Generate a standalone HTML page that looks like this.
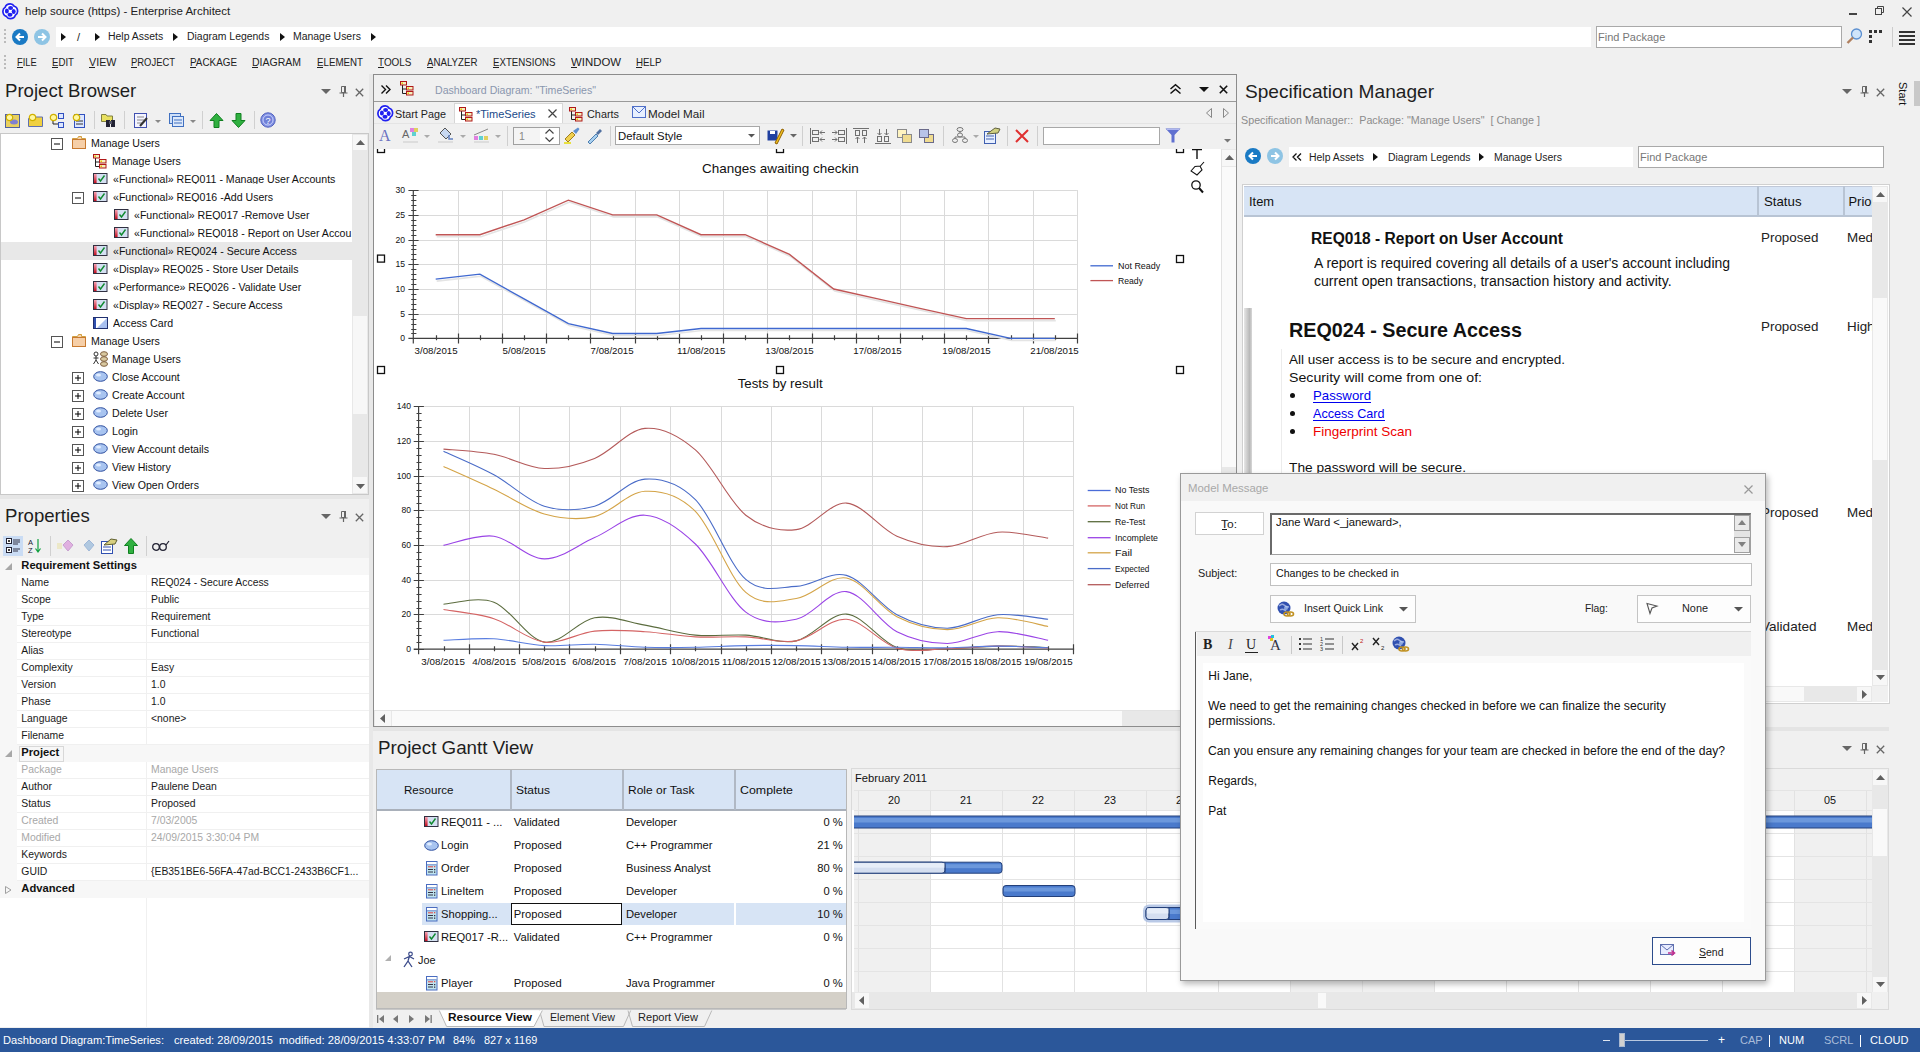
<!DOCTYPE html>
<html><head><meta charset="utf-8"><title>Enterprise Architect</title>
<style>
html,body{margin:0;padding:0;}
body{width:1920px;height:1052px;overflow:hidden;position:relative;background:#f0f0f0;font-family:"Liberation Sans",sans-serif;color:#000;}
.a{position:absolute;}
.t{position:absolute;white-space:pre;}
svg.a{overflow:visible;}
</style></head><body>
<svg class="a" style="left:2px;top:3px;" width="17" height="17" viewBox="0 0 17 17"><path d="M8.3 0.9 C10.5 0.9 11.5 2 12.2 3.2 C13.6 3.6 15.6 5 15.6 8.3 C15.6 10.5 14.5 11.6 13.3 12.3 C12.9 13.7 11.5 15.7 8.3 15.7 C6.1 15.7 5 14.6 4.3 13.4 C2.9 13 0.9 11.6 0.9 8.3 C0.9 6.1 2 5 3.2 4.3 C3.6 2.9 5 0.9 8.3 0.9z" fill="#fff" stroke="#2020f0" stroke-width="1.7"/><g fill="#2020f0"><ellipse cx="8.6" cy="4.9" rx="2.5" ry="2"/><ellipse cx="11.7" cy="8.6" rx="2" ry="2.5"/><ellipse cx="8" cy="11.7" rx="2.5" ry="2"/><ellipse cx="4.9" cy="8" rx="2" ry="2.5"/></g></svg>
<div class="t" style="left:25.0px;top:6.3px;font-size:11.5px;line-height:11.5px;color:#222;">help source (https) - Enterprise Architect</div>
<div class="a" style="left:1849px;top:13px;width:8px;height:2px;background:#444;"></div>
<svg class="a" style="left:1875px;top:6px;" width="10" height="10" viewBox="0 0 10 10"><rect x="0.5" y="2.5" width="6" height="6" fill="none" stroke="#444"/><path d="M2.5 2.5 V0.5 H8.5 V6.5 H6.5" fill="none" stroke="#444"/></svg>
<svg class="a" style="left:1902px;top:7px;" width="10" height="10" viewBox="0 0 10 10"><path d="M0.5 0.5 L9.5 9.5 M9.5 0.5 L0.5 9.5" stroke="#444" stroke-width="1.2"/></svg>
<div class="a" style="left:4px;top:29px;width:2px;height:2px;background:#bbb;"></div>
<div class="a" style="left:4px;top:33px;width:2px;height:2px;background:#bbb;"></div>
<div class="a" style="left:4px;top:37px;width:2px;height:2px;background:#bbb;"></div>
<div class="a" style="left:4px;top:41px;width:2px;height:2px;background:#bbb;"></div>
<svg class="a" style="left:12px;top:29px;" width="17" height="17" viewBox="0 0 17 17"><circle cx="8" cy="8" r="8" fill="#1a7ac4"/><path d="M12 8 H4.5 M8 4.5 L4.5 8 L8 11.5" stroke="#fff" stroke-width="2" fill="none"/></svg>
<svg class="a" style="left:34px;top:29px;" width="17" height="17" viewBox="0 0 17 17"><circle cx="8" cy="8" r="8" fill="#8ec4e4"/><path d="M4 8 H11.5 M8 4.5 L11.5 8 L8 11.5" stroke="#fff" stroke-width="2" fill="none"/></svg>
<div class="a" style="left:56px;top:27px;width:1535px;height:20px;background:#fff;"></div>
<svg class="a" style="left:61px;top:33px;" width="5" height="8" viewBox="0 0 5 8"><path d="M0 0 L5 4 L0 8z" fill="#111"/></svg>
<div class="t" style="left:77.0px;top:31.7px;font-size:11px;line-height:11px;color:#222;">/</div>
<svg class="a" style="left:95px;top:33px;" width="5" height="8" viewBox="0 0 5 8"><path d="M0 0 L5 4 L0 8z" fill="#111"/></svg>
<div class="t" style="left:108.0px;top:32.2px;font-size:10.45px;line-height:10.45px;color:#222;">Help Assets</div>
<svg class="a" style="left:173px;top:33px;" width="5" height="8" viewBox="0 0 5 8"><path d="M0 0 L5 4 L0 8z" fill="#111"/></svg>
<div class="t" style="left:187.0px;top:32.2px;font-size:10.45px;line-height:10.45px;color:#222;">Diagram Legends</div>
<svg class="a" style="left:280px;top:33px;" width="5" height="8" viewBox="0 0 5 8"><path d="M0 0 L5 4 L0 8z" fill="#111"/></svg>
<div class="t" style="left:293.0px;top:32.2px;font-size:10.45px;line-height:10.45px;color:#222;">Manage Users</div>
<svg class="a" style="left:371px;top:33px;" width="5" height="8" viewBox="0 0 5 8"><path d="M0 0 L5 4 L0 8z" fill="#111"/></svg>
<div class="a" style="left:1596px;top:26px;width:246px;height:22px;background:#fff;box-sizing:border-box;border:1px solid #a9a9a9;"></div>
<div class="t" style="left:1598.0px;top:31.7px;font-size:11px;line-height:11px;color:#777;">Find Package</div>
<svg class="a" style="left:1846px;top:28px;" width="17" height="17" viewBox="0 0 17 17"><circle cx="10.5" cy="6" r="5" fill="#cfe4fa" stroke="#5b8fd0" stroke-width="1.3"/><path d="M7 9.5 L1.5 15" stroke="#b08060" stroke-width="2.4"/></svg>
<svg class="a" style="left:1869px;top:30px;" width="16" height="15" viewBox="0 0 16 15"><g fill="#333"><rect x="0" y="0" width="3" height="3"/><rect x="5" y="0" width="3" height="3"/><rect x="10" y="0" width="3" height="3"/><rect x="0" y="5" width="3" height="3"/><rect x="0" y="10" width="3" height="3"/></g></svg>
<div class="a" style="left:1892px;top:27px;width:1px;height:20px;background:#ccc;"></div>
<svg class="a" style="left:1899px;top:31px;" width="16" height="14" viewBox="0 0 16 14"><g fill="#333"><rect y="0" width="16" height="2"/><rect y="4" width="16" height="2"/><rect y="8" width="16" height="2"/><rect y="12" width="16" height="2"/></g></svg>
<div class="a" style="left:4px;top:55px;width:2px;height:2px;background:#bbb;"></div>
<div class="a" style="left:4px;top:59px;width:2px;height:2px;background:#bbb;"></div>
<div class="a" style="left:4px;top:63px;width:2px;height:2px;background:#bbb;"></div>
<div class="a" style="left:4px;top:67px;width:2px;height:2px;background:#bbb;"></div>
<div class="t" style="left:17.0px;top:57.1px;font-size:10.5px;line-height:10.5px;color:#222;"><span style="display:inline-block;transform:scaleX(0.8901);transform-origin:0 0">FILE</span></div>
<div class="a" style="left:17px;top:67px;width:6px;height:1px;background:#222;"></div>
<div class="t" style="left:52.0px;top:57.1px;font-size:10.5px;line-height:10.5px;color:#222;"><span style="display:inline-block;transform:scaleX(0.9197);transform-origin:0 0">EDIT</span></div>
<div class="a" style="left:52px;top:67px;width:6px;height:1px;background:#222;"></div>
<div class="t" style="left:89.0px;top:57.1px;font-size:10.5px;line-height:10.5px;color:#222;"><span style="display:inline-block;transform:scaleX(1.0244);transform-origin:0 0">VIEW</span></div>
<div class="a" style="left:89px;top:67px;width:6px;height:1px;background:#222;"></div>
<div class="t" style="left:131.0px;top:57.1px;font-size:10.5px;line-height:10.5px;color:#222;"><span style="display:inline-block;transform:scaleX(0.8977);transform-origin:0 0">PROJECT</span></div>
<div class="a" style="left:131px;top:67px;width:6px;height:1px;background:#222;"></div>
<div class="t" style="left:190.0px;top:57.1px;font-size:10.5px;line-height:10.5px;color:#222;"><span style="display:inline-block;transform:scaleX(0.9400);transform-origin:0 0">PACKAGE</span></div>
<div class="a" style="left:190px;top:67px;width:6px;height:1px;background:#222;"></div>
<div class="t" style="left:252.0px;top:57.1px;font-size:10.5px;line-height:10.5px;color:#222;"><span style="display:inline-block;transform:scaleX(0.9997);transform-origin:0 0">DIAGRAM</span></div>
<div class="a" style="left:252px;top:67px;width:6px;height:1px;background:#222;"></div>
<div class="t" style="left:317.0px;top:57.1px;font-size:10.5px;line-height:10.5px;color:#222;"><span style="display:inline-block;transform:scaleX(0.9275);transform-origin:0 0">ELEMENT</span></div>
<div class="a" style="left:317px;top:67px;width:6px;height:1px;background:#222;"></div>
<div class="t" style="left:378.0px;top:57.1px;font-size:10.5px;line-height:10.5px;color:#222;"><span style="display:inline-block;transform:scaleX(0.9462);transform-origin:0 0">TOOLS</span></div>
<div class="a" style="left:378px;top:67px;width:6px;height:1px;background:#222;"></div>
<div class="t" style="left:427.0px;top:57.1px;font-size:10.5px;line-height:10.5px;color:#222;"><span style="display:inline-block;transform:scaleX(0.9240);transform-origin:0 0">ANALYZER</span></div>
<div class="a" style="left:427px;top:67px;width:6px;height:1px;background:#222;"></div>
<div class="t" style="left:493.0px;top:57.1px;font-size:10.5px;line-height:10.5px;color:#222;"><span style="display:inline-block;transform:scaleX(0.9234);transform-origin:0 0">EXTENSIONS</span></div>
<div class="a" style="left:493px;top:67px;width:6px;height:1px;background:#222;"></div>
<div class="t" style="left:571.0px;top:57.1px;font-size:10.5px;line-height:10.5px;color:#222;"><span style="display:inline-block;transform:scaleX(1.0851);transform-origin:0 0">WINDOW</span></div>
<div class="a" style="left:571px;top:67px;width:6px;height:1px;background:#222;"></div>
<div class="t" style="left:636.0px;top:57.1px;font-size:10.5px;line-height:10.5px;color:#222;"><span style="display:inline-block;transform:scaleX(0.9294);transform-origin:0 0">HELP</span></div>
<div class="a" style="left:636px;top:67px;width:6px;height:1px;background:#222;"></div>
<div class="a" style="left:0px;top:1028px;width:1920px;height:24px;background:#2b579a;"></div>
<div class="t" style="left:3.0px;top:1034.7px;font-size:11px;line-height:11px;color:#fff;"><span style="display:inline-block;transform:scaleX(1.0077);transform-origin:0 0">Dashboard Diagram:TimeSeries:</span></div>
<div class="t" style="left:173.5px;top:1034.7px;font-size:11px;line-height:11px;color:#fff;"><span style="display:inline-block;transform:scaleX(1.0117);transform-origin:0 0">created: 28/09/2015</span></div>
<div class="t" style="left:279.0px;top:1034.7px;font-size:11px;line-height:11px;color:#fff;"><span style="display:inline-block;transform:scaleX(1.0243);transform-origin:0 0">modified: 28/09/2015 4:33:07 PM</span></div>
<div class="t" style="left:453.0px;top:1034.7px;font-size:11px;line-height:11px;color:#fff;"><span style="display:inline-block;transform:scaleX(0.9986);transform-origin:0 0">84%</span></div>
<div class="t" style="left:483.5px;top:1034.7px;font-size:11px;line-height:11px;color:#fff;"><span style="display:inline-block;transform:scaleX(0.9939);transform-origin:0 0">827 x 1169</span></div>
<div class="a" style="left:1603px;top:1040px;width:7px;height:1px;background:#dfe6f0;"></div>
<div class="a" style="left:1624px;top:1040px;width:84px;height:1px;background:#b8c8e0;"></div>
<div class="a" style="left:1619px;top:1033px;width:6px;height:14px;background:#d0d0d0;box-sizing:border-box;border:1px solid #a8b8d0;"></div>
<div class="t" style="left:1718.0px;top:1033.8px;font-size:12px;line-height:12px;color:#fff;">+</div>
<div class="t" style="left:1740.0px;top:1034.7px;font-size:11px;line-height:11px;color:#a9bcd9;">CAP</div>
<div class="a" style="left:1769px;top:1035px;width:1px;height:12px;background:#fff;"></div>
<div class="t" style="left:1779.0px;top:1034.7px;font-size:11px;line-height:11px;color:#fff;">NUM</div>
<div class="t" style="left:1824.0px;top:1034.7px;font-size:11px;line-height:11px;color:#a9bcd9;">SCRL</div>
<div class="a" style="left:1860px;top:1035px;width:1px;height:12px;background:#fff;"></div>
<div class="t" style="left:1870.0px;top:1034.7px;font-size:11px;line-height:11px;color:#fff;">CLOUD</div>
<div class="t" style="left:1894px;top:82px;font-size:11px;line-height:13px;color:#111;transform:rotate(90deg);transform-origin:0 0;left:1909px">Start</div>
<div class="a" style="left:1914px;top:81px;width:6px;height:25px;background:#c8c8c8;"></div>
<div class="t" style="left:5.0px;top:81.8px;font-size:18.6px;line-height:18.6px;color:#1e1e1e;">Project Browser</div>
<svg class="a" style="left:321px;top:89px;" width="10" height="6" viewBox="0 0 10 6"><path d="M0 0 H10 L5 5z" fill="#666"/></svg>
<svg class="a" style="left:339px;top:86px;" width="9" height="11" viewBox="0 0 9 11"><path d="M2.5 0.5 H6.5 V6.5 H2.5z" fill="none" stroke="#666"/><rect x="5" y="0" width="2" height="7" fill="#666"/><path d="M0.5 7 H8.5 M4.5 7 V11" stroke="#666" stroke-width="1.2"/></svg>
<svg class="a" style="left:355px;top:87.5px;" width="9" height="9" viewBox="0 0 9 9"><path d="M0.8 0.8 L8.2 8.2 M8.2 0.8 L0.8 8.2" stroke="#666" stroke-width="1.3"/></svg>
<svg class="a" style="left:5px;top:113px;" width="16" height="15" viewBox="0 0 16 15"><rect x="0.5" y="1.5" width="14" height="13" fill="#e8d060" stroke="#5060a0"/><ellipse cx="9" cy="9" rx="4" ry="2.5" fill="#8080d0"/><circle cx="4.5" cy="4.5" r="3.2" fill="#fff8a0" stroke="#d0b000" stroke-width="1.2"/></svg>
<svg class="a" style="left:28px;top:113px;" width="15" height="15" viewBox="0 0 15 15"><path d="M0.5 5.5 H6 L7 4 H14.5 V13.5 H0.5z" fill="#f0d040" stroke="#6070b0"/><circle cx="4.5" cy="4.5" r="3.2" fill="#fff8a0" stroke="#d0b000" stroke-width="1.2"/></svg>
<svg class="a" style="left:49px;top:113px;" width="16" height="15" viewBox="0 0 16 15"><path d="M4 5 V11 H9" stroke="#222" fill="none"/><rect x="9.5" y="0.5" width="5" height="5" fill="#dce6ff" stroke="#3050c0"/><rect x="9.5" y="9.5" width="5" height="5" fill="#dce6ff" stroke="#3050c0"/><circle cx="4.5" cy="4.5" r="3.2" fill="#fff8a0" stroke="#d0b000" stroke-width="1.2"/></svg>
<svg class="a" style="left:72px;top:113px;" width="13" height="15" viewBox="0 0 13 15"><rect x="2.5" y="1.5" width="10" height="13" fill="#dce6ff" stroke="#3050c0"/><path d="M4 8 H11 M4 11 H11" stroke="#333"/><circle cx="4.5" cy="4.5" r="3.2" fill="#fff8a0" stroke="#d0b000" stroke-width="1.2"/></svg>
<div class="a" style="left:94px;top:111px;width:1px;height:18px;background:#d0d0d0;"></div>
<svg class="a" style="left:101px;top:113px;" width="16" height="15" viewBox="0 0 16 15"><path d="M0.5 1.5 H5 L6 3 H11.5 V8.5 H0.5z" fill="#e8e060" stroke="#808040"/><rect x="5" y="7" width="4" height="7" fill="#223"/><rect x="10" y="7" width="4" height="7" fill="#223"/><rect x="8" y="8" width="3" height="3" fill="#556"/></svg>
<div class="a" style="left:124px;top:111px;width:1px;height:18px;background:#d0d0d0;"></div>
<svg class="a" style="left:134px;top:113px;" width="15" height="15" viewBox="0 0 15 15"><rect x="0.5" y="0.5" width="12" height="14" fill="#f4f4ff" stroke="#4050b0"/><path d="M3 4 H10 M3 7 H10 M3 10 H8" stroke="#888"/><path d="M6 13 L13 5" stroke="#333" stroke-width="2"/></svg>
<svg class="a" style="left:155px;top:120px;" width="6" height="4" viewBox="0 0 6 4"><path d="M0 0 H6 L3 3z" fill="#888"/></svg>
<svg class="a" style="left:169px;top:113px;" width="16" height="15" viewBox="0 0 16 15"><rect x="0.5" y="0.5" width="11" height="10" fill="#cfe0f8" stroke="#4070c0"/><rect x="3.5" y="3.5" width="11" height="10" fill="#dce8fa" stroke="#4070c0"/><path d="M5 7 H13 M5 10 H13" stroke="#4070c0"/></svg>
<svg class="a" style="left:190px;top:120px;" width="6" height="4" viewBox="0 0 6 4"><path d="M0 0 H6 L3 3z" fill="#888"/></svg>
<div class="a" style="left:202px;top:111px;width:1px;height:18px;background:#d0d0d0;"></div>
<svg class="a" style="left:209px;top:113px;" width="15" height="15" viewBox="0 0 15 15"><path d="M7.5 0.5 L14 7.5 H10 V14.5 H5 V7.5 H1z" fill="#30b040" stroke="#108020"/></svg>
<svg class="a" style="left:231px;top:113px;" width="15" height="15" viewBox="0 0 15 15"><path d="M7.5 14.5 L14 7.5 H10 V0.5 H5 V7.5 H1z" fill="#30b040" stroke="#108020"/></svg>
<div class="a" style="left:254px;top:111px;width:1px;height:18px;background:#d0d0d0;"></div>
<svg class="a" style="left:260px;top:112px;" width="16" height="16" viewBox="0 0 16 16"><circle cx="8" cy="8" r="7.2" fill="#8090e0" stroke="#5060c0"/><circle cx="8" cy="8" r="5" fill="#7080d8" stroke="#c8d0ff"/><text x="8" y="11.5" font-size="9" text-anchor="middle" fill="#fff" font-family="Liberation Sans">?</text></svg>
<div class="a" style="left:0px;top:133px;width:369px;height:362px;background:#fff;box-sizing:border-box;border:1px solid #c8c8c8;"></div>
<div class="a" style="left:1px;top:242px;width:351px;height:18px;background:#e8e8e8;"></div>
<div class="a" style="left:352px;top:134px;width:16px;height:360px;background:#e8e8e8;"></div>
<div class="a" style="left:353px;top:135px;width:14px;height:15px;background:#f7f7f7;"></div>
<svg class="a" style="left:356px;top:140px;" width="9" height="5" viewBox="0 0 9 5"><path d="M0 5 L4.5 0 L9 5z" fill="#606060"/></svg>
<div class="a" style="left:353px;top:316px;width:14px;height:98px;background:#f7f7f7;"></div>
<div class="a" style="left:353px;top:477px;width:14px;height:16px;background:#f7f7f7;"></div>
<svg class="a" style="left:356px;top:484px;" width="9" height="5" viewBox="0 0 9 5"><path d="M0 0 L4.5 5 L9 0z" fill="#606060"/></svg>
<svg class="a" style="left:51px;top:138px;" width="12" height="12" viewBox="0 0 12 12"><rect x="0.5" y="0.5" width="11" height="11" fill="#fff" stroke="#555"/><path d="M3 6 H9" stroke="#000"/></svg>
<svg class="a" style="left:71px;top:135px;" width="16" height="15" viewBox="0 0 16 15"><path d="M1.5 3.5 h5 l1 -2 h3 v2 h4 v10 h-13z" fill="#f6d2b0" stroke="#d0a040"/><rect x="1.5" y="4.5" width="13" height="9" fill="#f6cfa8" stroke="#c87a30"/></svg>
<div class="t" style="left:91.0px;top:137.7px;font-size:10.6px;line-height:10.6px;color:#111;">Manage Users</div>
<svg class="a" style="left:93px;top:154px;" width="14" height="15" viewBox="0 0 14 15"><path d="M2.5 4 V12.5 H6 M2.5 8 H6" stroke="#222" fill="none"/><rect x="0.5" y="0.5" width="6" height="3.5" fill="#f4f0c0" stroke="#b01818"/><rect x="6.5" y="5.5" width="6.5" height="3.5" fill="#f4f0c0" stroke="#b01818"/><rect x="6.5" y="10.5" width="6.5" height="3.5" fill="#f4f0c0" stroke="#b01818"/><rect x="1.5" y="1.5" width="1.5" height="1.5" fill="#e8c000"/><rect x="7.5" y="6.5" width="1.5" height="1.5" fill="#e8c000"/><rect x="7.5" y="11.5" width="1.5" height="1.5" fill="#e8c000"/></svg>
<div class="t" style="left:112.0px;top:155.7px;font-size:10.6px;line-height:10.6px;color:#111;">Manage Users</div>
<svg class="a" style="left:93px;top:173px;" width="15" height="12" viewBox="0 0 15 12"><defs><linearGradient id="rq" x1="0" x2="0" y1="0" y2="1"><stop offset="0" stop-color="#f8a0b0"/><stop offset="1" stop-color="#c01020"/></linearGradient></defs><rect x="0.5" y="0.5" width="13.5" height="10" fill="#d4e0f2" stroke="#303040"/><rect x="1" y="1" width="2.6" height="9" fill="url(#rq)"/><path d="M5.5 5.5 L7.5 8 L11.5 2.5" stroke="#108a30" stroke-width="1.4" fill="none"/></svg>
<div class="t" style="left:113.0px;top:173.7px;font-size:10.6px;line-height:10.6px;color:#111;width:239px;overflow:hidden;">«Functional» REQ011 - Manage User Accounts</div>
<svg class="a" style="left:72px;top:192px;" width="12" height="12" viewBox="0 0 12 12"><rect x="0.5" y="0.5" width="11" height="11" fill="#fff" stroke="#555"/><path d="M3 6 H9" stroke="#000"/></svg>
<svg class="a" style="left:93px;top:191px;" width="15" height="12" viewBox="0 0 15 12"><defs><linearGradient id="rq" x1="0" x2="0" y1="0" y2="1"><stop offset="0" stop-color="#f8a0b0"/><stop offset="1" stop-color="#c01020"/></linearGradient></defs><rect x="0.5" y="0.5" width="13.5" height="10" fill="#d4e0f2" stroke="#303040"/><rect x="1" y="1" width="2.6" height="9" fill="url(#rq)"/><path d="M5.5 5.5 L7.5 8 L11.5 2.5" stroke="#108a30" stroke-width="1.4" fill="none"/></svg>
<div class="t" style="left:113.0px;top:191.7px;font-size:10.6px;line-height:10.6px;color:#111;width:239px;overflow:hidden;">«Functional» REQ016 -Add Users</div>
<svg class="a" style="left:114px;top:209px;" width="15" height="12" viewBox="0 0 15 12"><defs><linearGradient id="rq" x1="0" x2="0" y1="0" y2="1"><stop offset="0" stop-color="#f8a0b0"/><stop offset="1" stop-color="#c01020"/></linearGradient></defs><rect x="0.5" y="0.5" width="13.5" height="10" fill="#d4e0f2" stroke="#303040"/><rect x="1" y="1" width="2.6" height="9" fill="url(#rq)"/><path d="M5.5 5.5 L7.5 8 L11.5 2.5" stroke="#108a30" stroke-width="1.4" fill="none"/></svg>
<div class="t" style="left:134.0px;top:209.7px;font-size:10.6px;line-height:10.6px;color:#111;width:218px;overflow:hidden;">«Functional» REQ017 -Remove User</div>
<svg class="a" style="left:114px;top:227px;" width="15" height="12" viewBox="0 0 15 12"><defs><linearGradient id="rq" x1="0" x2="0" y1="0" y2="1"><stop offset="0" stop-color="#f8a0b0"/><stop offset="1" stop-color="#c01020"/></linearGradient></defs><rect x="0.5" y="0.5" width="13.5" height="10" fill="#d4e0f2" stroke="#303040"/><rect x="1" y="1" width="2.6" height="9" fill="url(#rq)"/><path d="M5.5 5.5 L7.5 8 L11.5 2.5" stroke="#108a30" stroke-width="1.4" fill="none"/></svg>
<div class="t" style="left:134.0px;top:227.7px;font-size:10.6px;line-height:10.6px;color:#111;width:218px;overflow:hidden;">«Functional» REQ018 - Report on User Accou</div>
<svg class="a" style="left:93px;top:245px;" width="15" height="12" viewBox="0 0 15 12"><defs><linearGradient id="rq" x1="0" x2="0" y1="0" y2="1"><stop offset="0" stop-color="#f8a0b0"/><stop offset="1" stop-color="#c01020"/></linearGradient></defs><rect x="0.5" y="0.5" width="13.5" height="10" fill="#d4e0f2" stroke="#303040"/><rect x="1" y="1" width="2.6" height="9" fill="url(#rq)"/><path d="M5.5 5.5 L7.5 8 L11.5 2.5" stroke="#108a30" stroke-width="1.4" fill="none"/></svg>
<div class="t" style="left:113.0px;top:245.7px;font-size:10.6px;line-height:10.6px;color:#111;width:239px;overflow:hidden;">«Functional» REQ024 - Secure Access</div>
<svg class="a" style="left:93px;top:263px;" width="15" height="12" viewBox="0 0 15 12"><defs><linearGradient id="rq" x1="0" x2="0" y1="0" y2="1"><stop offset="0" stop-color="#f8a0b0"/><stop offset="1" stop-color="#c01020"/></linearGradient></defs><rect x="0.5" y="0.5" width="13.5" height="10" fill="#d4e0f2" stroke="#303040"/><rect x="1" y="1" width="2.6" height="9" fill="url(#rq)"/><path d="M5.5 5.5 L7.5 8 L11.5 2.5" stroke="#108a30" stroke-width="1.4" fill="none"/></svg>
<div class="t" style="left:113.0px;top:263.7px;font-size:10.6px;line-height:10.6px;color:#111;width:239px;overflow:hidden;">«Display» REQ025 - Store User Details</div>
<svg class="a" style="left:93px;top:281px;" width="15" height="12" viewBox="0 0 15 12"><defs><linearGradient id="rq" x1="0" x2="0" y1="0" y2="1"><stop offset="0" stop-color="#f8a0b0"/><stop offset="1" stop-color="#c01020"/></linearGradient></defs><rect x="0.5" y="0.5" width="13.5" height="10" fill="#d4e0f2" stroke="#303040"/><rect x="1" y="1" width="2.6" height="9" fill="url(#rq)"/><path d="M5.5 5.5 L7.5 8 L11.5 2.5" stroke="#108a30" stroke-width="1.4" fill="none"/></svg>
<div class="t" style="left:113.0px;top:281.7px;font-size:10.6px;line-height:10.6px;color:#111;width:239px;overflow:hidden;">«Performance» REQ026 - Validate User</div>
<svg class="a" style="left:93px;top:299px;" width="15" height="12" viewBox="0 0 15 12"><defs><linearGradient id="rq" x1="0" x2="0" y1="0" y2="1"><stop offset="0" stop-color="#f8a0b0"/><stop offset="1" stop-color="#c01020"/></linearGradient></defs><rect x="0.5" y="0.5" width="13.5" height="10" fill="#d4e0f2" stroke="#303040"/><rect x="1" y="1" width="2.6" height="9" fill="url(#rq)"/><path d="M5.5 5.5 L7.5 8 L11.5 2.5" stroke="#108a30" stroke-width="1.4" fill="none"/></svg>
<div class="t" style="left:113.0px;top:299.7px;font-size:10.6px;line-height:10.6px;color:#111;width:239px;overflow:hidden;">«Display» REQ027 - Secure Access</div>
<svg class="a" style="left:93px;top:317px;" width="15" height="12" viewBox="0 0 15 12"><rect x="0.5" y="0.5" width="14" height="11" fill="#fff" stroke="#203070"/><rect x="1" y="1" width="2" height="10" fill="#3050b0"/><path d="M4 11 L14 1 V11z" fill="#a8c0f0"/></svg>
<div class="t" style="left:113.0px;top:317.7px;font-size:10.6px;line-height:10.6px;color:#111;width:239px;overflow:hidden;">Access Card</div>
<svg class="a" style="left:51px;top:336px;" width="12" height="12" viewBox="0 0 12 12"><rect x="0.5" y="0.5" width="11" height="11" fill="#fff" stroke="#555"/><path d="M3 6 H9" stroke="#000"/></svg>
<svg class="a" style="left:71px;top:333px;" width="16" height="15" viewBox="0 0 16 15"><path d="M1.5 3.5 h5 l1 -2 h3 v2 h4 v10 h-13z" fill="#f6d2b0" stroke="#d0a040"/><rect x="1.5" y="4.5" width="13" height="9" fill="#f6cfa8" stroke="#c87a30"/></svg>
<div class="t" style="left:91.0px;top:335.7px;font-size:10.6px;line-height:10.6px;color:#111;">Manage Users</div>
<svg class="a" style="left:93px;top:351px;" width="15" height="16" viewBox="0 0 15 16"><circle cx="3" cy="3" r="2" fill="#fff" stroke="#333"/><path d="M3 5 V9 M0.5 7 H5.5 M0.5 13 L3 9 L5.5 13" stroke="#333" fill="none"/><ellipse cx="11" cy="3" rx="3.5" ry="2.3" fill="#d8c8a0" stroke="#806040"/><ellipse cx="11" cy="8" rx="3.5" ry="2.3" fill="#d8c8a0" stroke="#806040"/><ellipse cx="11" cy="13" rx="3.5" ry="2.3" fill="#d8c8a0" stroke="#806040"/></svg>
<div class="t" style="left:112.0px;top:353.7px;font-size:10.6px;line-height:10.6px;color:#111;">Manage Users</div>
<svg class="a" style="left:72px;top:372px;" width="12" height="12" viewBox="0 0 12 12"><rect x="0.5" y="0.5" width="11" height="11" fill="#fff" stroke="#555"/><path d="M3 6 H9 M6 3 V9" stroke="#000"/></svg>
<svg class="a" style="left:93px;top:371px;" width="15" height="11" viewBox="0 0 15 11"><ellipse cx="7.5" cy="5.5" rx="6.8" ry="4.8" fill="#a8c4f0" stroke="#3050a0"/><ellipse cx="5.5" cy="4" rx="2.5" ry="1.5" fill="#e0ecff"/></svg>
<div class="t" style="left:112.0px;top:371.7px;font-size:10.6px;line-height:10.6px;color:#111;">Close Account</div>
<svg class="a" style="left:72px;top:390px;" width="12" height="12" viewBox="0 0 12 12"><rect x="0.5" y="0.5" width="11" height="11" fill="#fff" stroke="#555"/><path d="M3 6 H9 M6 3 V9" stroke="#000"/></svg>
<svg class="a" style="left:93px;top:389px;" width="15" height="11" viewBox="0 0 15 11"><ellipse cx="7.5" cy="5.5" rx="6.8" ry="4.8" fill="#a8c4f0" stroke="#3050a0"/><ellipse cx="5.5" cy="4" rx="2.5" ry="1.5" fill="#e0ecff"/></svg>
<div class="t" style="left:112.0px;top:389.7px;font-size:10.6px;line-height:10.6px;color:#111;">Create Account</div>
<svg class="a" style="left:72px;top:408px;" width="12" height="12" viewBox="0 0 12 12"><rect x="0.5" y="0.5" width="11" height="11" fill="#fff" stroke="#555"/><path d="M3 6 H9 M6 3 V9" stroke="#000"/></svg>
<svg class="a" style="left:93px;top:407px;" width="15" height="11" viewBox="0 0 15 11"><ellipse cx="7.5" cy="5.5" rx="6.8" ry="4.8" fill="#a8c4f0" stroke="#3050a0"/><ellipse cx="5.5" cy="4" rx="2.5" ry="1.5" fill="#e0ecff"/></svg>
<div class="t" style="left:112.0px;top:407.7px;font-size:10.6px;line-height:10.6px;color:#111;">Delete User</div>
<svg class="a" style="left:72px;top:426px;" width="12" height="12" viewBox="0 0 12 12"><rect x="0.5" y="0.5" width="11" height="11" fill="#fff" stroke="#555"/><path d="M3 6 H9 M6 3 V9" stroke="#000"/></svg>
<svg class="a" style="left:93px;top:425px;" width="15" height="11" viewBox="0 0 15 11"><ellipse cx="7.5" cy="5.5" rx="6.8" ry="4.8" fill="#a8c4f0" stroke="#3050a0"/><ellipse cx="5.5" cy="4" rx="2.5" ry="1.5" fill="#e0ecff"/></svg>
<div class="t" style="left:112.0px;top:425.7px;font-size:10.6px;line-height:10.6px;color:#111;">Login</div>
<svg class="a" style="left:72px;top:444px;" width="12" height="12" viewBox="0 0 12 12"><rect x="0.5" y="0.5" width="11" height="11" fill="#fff" stroke="#555"/><path d="M3 6 H9 M6 3 V9" stroke="#000"/></svg>
<svg class="a" style="left:93px;top:443px;" width="15" height="11" viewBox="0 0 15 11"><ellipse cx="7.5" cy="5.5" rx="6.8" ry="4.8" fill="#a8c4f0" stroke="#3050a0"/><ellipse cx="5.5" cy="4" rx="2.5" ry="1.5" fill="#e0ecff"/></svg>
<div class="t" style="left:112.0px;top:443.7px;font-size:10.6px;line-height:10.6px;color:#111;">View Account details</div>
<svg class="a" style="left:72px;top:462px;" width="12" height="12" viewBox="0 0 12 12"><rect x="0.5" y="0.5" width="11" height="11" fill="#fff" stroke="#555"/><path d="M3 6 H9 M6 3 V9" stroke="#000"/></svg>
<svg class="a" style="left:93px;top:461px;" width="15" height="11" viewBox="0 0 15 11"><ellipse cx="7.5" cy="5.5" rx="6.8" ry="4.8" fill="#a8c4f0" stroke="#3050a0"/><ellipse cx="5.5" cy="4" rx="2.5" ry="1.5" fill="#e0ecff"/></svg>
<div class="t" style="left:112.0px;top:461.7px;font-size:10.6px;line-height:10.6px;color:#111;">View History</div>
<svg class="a" style="left:72px;top:480px;" width="12" height="12" viewBox="0 0 12 12"><rect x="0.5" y="0.5" width="11" height="11" fill="#fff" stroke="#555"/><path d="M3 6 H9 M6 3 V9" stroke="#000"/></svg>
<svg class="a" style="left:93px;top:479px;" width="15" height="11" viewBox="0 0 15 11"><ellipse cx="7.5" cy="5.5" rx="6.8" ry="4.8" fill="#a8c4f0" stroke="#3050a0"/><ellipse cx="5.5" cy="4" rx="2.5" ry="1.5" fill="#e0ecff"/></svg>
<div class="t" style="left:112.0px;top:479.7px;font-size:10.6px;line-height:10.6px;color:#111;">View Open Orders</div>
<div class="a" style="left:0px;top:495px;width:369px;height:4px;background:#e6e6e6;"></div>
<div class="t" style="left:5.0px;top:507.3px;font-size:18.6px;line-height:18.6px;color:#1e1e1e;">Properties</div>
<svg class="a" style="left:321px;top:514px;" width="10" height="6" viewBox="0 0 10 6"><path d="M0 0 H10 L5 5z" fill="#666"/></svg>
<svg class="a" style="left:339px;top:511px;" width="9" height="11" viewBox="0 0 9 11"><path d="M2.5 0.5 H6.5 V6.5 H2.5z" fill="none" stroke="#666"/><rect x="5" y="0" width="2" height="7" fill="#666"/><path d="M0.5 7 H8.5 M4.5 7 V11" stroke="#666" stroke-width="1.2"/></svg>
<svg class="a" style="left:355px;top:512.5px;" width="9" height="9" viewBox="0 0 9 9"><path d="M0.8 0.8 L8.2 8.2 M8.2 0.8 L0.8 8.2" stroke="#666" stroke-width="1.3"/></svg>
<div class="a" style="left:3px;top:536px;width:20px;height:20px;background:#cadcf4;"></div>
<svg class="a" style="left:6px;top:538px;" width="16" height="16" viewBox="0 0 16 16"><rect x="0.5" y="0.5" width="5" height="5" fill="#fff" stroke="#223"/><rect x="0.5" y="9.5" width="5" height="5" fill="#fff" stroke="#223"/><path d="M2 3 H4 M3 2 V4 M2 12 H4 M3 11 V13" stroke="#000"/><path d="M7 2 H14 M7 4 H14 M7 6 H12 M7 11 H14 M7 13 H12" stroke="#334"/></svg>
<svg class="a" style="left:28px;top:538px;" width="14" height="16" viewBox="0 0 14 16"><text x="0" y="7" font-size="7.5" font-family="Liberation Sans" fill="#223">A</text><text x="0" y="15" font-size="7.5" font-family="Liberation Sans" fill="#223">Z</text><path d="M10 1 V13 M7.5 10.5 L10 14 L12.5 10.5" stroke="#10a040" fill="none" stroke-width="1.2"/></svg>
<div class="a" style="left:50px;top:536px;width:1px;height:20px;background:#d0d0d0;"></div>
<svg class="a" style="left:57px;top:540px;" width="16" height="12" viewBox="0 0 16 12"><path d="M0 4 H5 M0 6 H5 M0 8 H5" stroke="#e8e0a0"/><path d="M11 0 L16 5 L11 11 L6 5z" fill="#e0b0e0" stroke="#c8a0d0"/></svg>
<svg class="a" style="left:84px;top:540px;" width="10" height="12" viewBox="0 0 10 12"><path d="M5 0 L10 5 L5 11 L0 5z" fill="#b0c8e0" stroke="#a0b8d8"/></svg>
<svg class="a" style="left:101px;top:538px;" width="17" height="16" viewBox="0 0 17 16"><rect x="0.5" y="3.5" width="11" height="12" fill="#fff" stroke="#3050b0"/><path d="M2 9 H10 M2 12 H10" stroke="#3050b0"/><path d="M3 7 L10 1 L16 2 L14 6z" fill="#d8d080" stroke="#606030"/></svg>
<svg class="a" style="left:124px;top:538px;" width="14" height="16" viewBox="0 0 14 16"><path d="M7 0.5 L13.5 7.5 H9.5 V15.5 H4.5 V7.5 H0.5z" fill="#30b040" stroke="#108020"/></svg>
<div class="a" style="left:146px;top:536px;width:1px;height:20px;background:#d0d0d0;"></div>
<svg class="a" style="left:152px;top:540px;" width="18" height="12" viewBox="0 0 18 12"><circle cx="4" cy="7" r="3.3" fill="none" stroke="#223" stroke-width="1.3"/><circle cx="11" cy="7" r="3.3" fill="none" stroke="#223" stroke-width="1.3"/><path d="M7 7 H8 M14 5 L17 1" stroke="#223" stroke-width="1.2"/></svg>
<div class="a" style="left:0px;top:558px;width:369px;height:469px;background:#fff;"></div>
<div class="a" style="left:0px;top:558px;width:17px;height:340px;background:#f7f7f7;"></div>
<div class="a" style="left:146px;top:575px;width:1px;height:452px;background:#f0f0f0;"></div>
<div class="a" style="left:0px;top:558px;width:369px;height:17px;background:#f7f7f7;"></div>
<svg class="a" style="left:5px;top:563px;" width="7" height="7" viewBox="0 0 7 7"><path d="M7 0 V7 H0z" fill="#a8a8a8"/></svg>
<div class="t" style="left:21.3px;top:560.1px;font-size:11.2px;line-height:11.2px;color:#111;font-weight:700;">Requirement Settings</div>
<div class="a" style="left:17px;top:591px;width:352px;height:1px;background:#f0f0f0;"></div>
<div class="t" style="left:21.3px;top:577.8px;font-size:10.4px;line-height:10.4px;color:#1a1a1a;">Name</div>
<div class="t" style="left:151.0px;top:577.8px;font-size:10.4px;line-height:10.4px;color:#1a1a1a;">REQ024 - Secure Access</div>
<div class="a" style="left:17px;top:608px;width:352px;height:1px;background:#f0f0f0;"></div>
<div class="t" style="left:21.3px;top:594.8px;font-size:10.4px;line-height:10.4px;color:#1a1a1a;">Scope</div>
<div class="t" style="left:151.0px;top:594.8px;font-size:10.4px;line-height:10.4px;color:#1a1a1a;">Public</div>
<div class="a" style="left:17px;top:625px;width:352px;height:1px;background:#f0f0f0;"></div>
<div class="t" style="left:21.3px;top:611.8px;font-size:10.4px;line-height:10.4px;color:#1a1a1a;">Type</div>
<div class="t" style="left:151.0px;top:611.8px;font-size:10.4px;line-height:10.4px;color:#1a1a1a;">Requirement</div>
<div class="a" style="left:17px;top:642px;width:352px;height:1px;background:#f0f0f0;"></div>
<div class="t" style="left:21.3px;top:628.8px;font-size:10.4px;line-height:10.4px;color:#1a1a1a;">Stereotype</div>
<div class="t" style="left:151.0px;top:628.8px;font-size:10.4px;line-height:10.4px;color:#1a1a1a;">Functional</div>
<div class="a" style="left:17px;top:659px;width:352px;height:1px;background:#f0f0f0;"></div>
<div class="t" style="left:21.3px;top:645.8px;font-size:10.4px;line-height:10.4px;color:#1a1a1a;">Alias</div>
<div class="t" style="left:151.0px;top:645.8px;font-size:10.4px;line-height:10.4px;color:#1a1a1a;"></div>
<div class="a" style="left:17px;top:676px;width:352px;height:1px;background:#f0f0f0;"></div>
<div class="t" style="left:21.3px;top:662.8px;font-size:10.4px;line-height:10.4px;color:#1a1a1a;">Complexity</div>
<div class="t" style="left:151.0px;top:662.8px;font-size:10.4px;line-height:10.4px;color:#1a1a1a;">Easy</div>
<div class="a" style="left:17px;top:693px;width:352px;height:1px;background:#f0f0f0;"></div>
<div class="t" style="left:21.3px;top:679.8px;font-size:10.4px;line-height:10.4px;color:#1a1a1a;">Version</div>
<div class="t" style="left:151.0px;top:679.8px;font-size:10.4px;line-height:10.4px;color:#1a1a1a;">1.0</div>
<div class="a" style="left:17px;top:710px;width:352px;height:1px;background:#f0f0f0;"></div>
<div class="t" style="left:21.3px;top:696.8px;font-size:10.4px;line-height:10.4px;color:#1a1a1a;">Phase</div>
<div class="t" style="left:151.0px;top:696.8px;font-size:10.4px;line-height:10.4px;color:#1a1a1a;">1.0</div>
<div class="a" style="left:17px;top:727px;width:352px;height:1px;background:#f0f0f0;"></div>
<div class="t" style="left:21.3px;top:713.8px;font-size:10.4px;line-height:10.4px;color:#1a1a1a;">Language</div>
<div class="t" style="left:151.0px;top:713.8px;font-size:10.4px;line-height:10.4px;color:#1a1a1a;">&lt;none&gt;</div>
<div class="a" style="left:17px;top:744px;width:352px;height:1px;background:#f0f0f0;"></div>
<div class="t" style="left:21.3px;top:730.8px;font-size:10.4px;line-height:10.4px;color:#1a1a1a;">Filename</div>
<div class="t" style="left:151.0px;top:730.8px;font-size:10.4px;line-height:10.4px;color:#1a1a1a;"></div>
<div class="a" style="left:0px;top:745px;width:369px;height:17px;background:#f7f7f7;"></div>
<svg class="a" style="left:5px;top:750px;" width="7" height="7" viewBox="0 0 7 7"><path d="M7 0 V7 H0z" fill="#a8a8a8"/></svg>
<div class="a" style="left:19px;top:746px;width:45px;height:16px;box-sizing:border-box;border:1px solid #d8d8d8;"></div>
<div class="t" style="left:21.3px;top:747.1px;font-size:11.2px;line-height:11.2px;color:#111;font-weight:700;">Project</div>
<div class="a" style="left:17px;top:778px;width:352px;height:1px;background:#f0f0f0;"></div>
<div class="t" style="left:21.3px;top:764.8px;font-size:10.4px;line-height:10.4px;color:#a8a8a8;">Package</div>
<div class="t" style="left:151.0px;top:764.8px;font-size:10.4px;line-height:10.4px;color:#a8a8a8;">Manage Users</div>
<div class="a" style="left:17px;top:795px;width:352px;height:1px;background:#f0f0f0;"></div>
<div class="t" style="left:21.3px;top:781.8px;font-size:10.4px;line-height:10.4px;color:#1a1a1a;">Author</div>
<div class="t" style="left:151.0px;top:781.8px;font-size:10.4px;line-height:10.4px;color:#1a1a1a;">Paulene Dean</div>
<div class="a" style="left:17px;top:812px;width:352px;height:1px;background:#f0f0f0;"></div>
<div class="t" style="left:21.3px;top:798.8px;font-size:10.4px;line-height:10.4px;color:#1a1a1a;">Status</div>
<div class="t" style="left:151.0px;top:798.8px;font-size:10.4px;line-height:10.4px;color:#1a1a1a;">Proposed</div>
<div class="a" style="left:17px;top:829px;width:352px;height:1px;background:#f0f0f0;"></div>
<div class="t" style="left:21.3px;top:815.8px;font-size:10.4px;line-height:10.4px;color:#a8a8a8;">Created</div>
<div class="t" style="left:151.0px;top:815.8px;font-size:10.4px;line-height:10.4px;color:#a8a8a8;">7/03/2005</div>
<div class="a" style="left:17px;top:846px;width:352px;height:1px;background:#f0f0f0;"></div>
<div class="t" style="left:21.3px;top:832.8px;font-size:10.4px;line-height:10.4px;color:#a8a8a8;">Modified</div>
<div class="t" style="left:151.0px;top:832.8px;font-size:10.4px;line-height:10.4px;color:#a8a8a8;">24/09/2015 3:30:04 PM</div>
<div class="a" style="left:17px;top:863px;width:352px;height:1px;background:#f0f0f0;"></div>
<div class="t" style="left:21.3px;top:849.8px;font-size:10.4px;line-height:10.4px;color:#1a1a1a;">Keywords</div>
<div class="t" style="left:151.0px;top:849.8px;font-size:10.4px;line-height:10.4px;color:#1a1a1a;"></div>
<div class="a" style="left:17px;top:880px;width:352px;height:1px;background:#f0f0f0;"></div>
<div class="t" style="left:21.3px;top:866.8px;font-size:10.4px;line-height:10.4px;color:#1a1a1a;">GUID</div>
<div class="t" style="left:151.0px;top:866.8px;font-size:10.4px;line-height:10.4px;color:#1a1a1a;">{EB351BE6-56FA-47ad-BCC1-2433B6CF1...</div>
<div class="a" style="left:0px;top:881px;width:369px;height:17px;background:#f7f7f7;"></div>
<svg class="a" style="left:5px;top:886px;" width="7" height="8" viewBox="0 0 7 8"><path d="M0.5 0.5 L6 4 L0.5 7.5z" fill="none" stroke="#a0a0a0"/></svg>
<div class="t" style="left:21.3px;top:883.1px;font-size:11.2px;line-height:11.2px;color:#111;font-weight:700;">Advanced</div>
<div class="a" style="left:369px;top:74px;width:4px;height:954px;background:#e8e8e8;"></div>
<div class="a" style="left:373px;top:74px;width:864px;height:653px;background:#f0f0f0;box-sizing:border-box;border:1px solid #8c8c8c;"></div>
<div class="a" style="left:374px;top:101px;width:862px;height:1px;background:#9a9a9a;"></div>
<svg class="a" style="left:381px;top:85px;" width="10" height="9" viewBox="0 0 10 9"><path d="M0.5 0.5 L4.5 4.5 L0.5 8.5 M5 0.5 L9 4.5 L5 8.5" fill="none" stroke="#111" stroke-width="1.4"/></svg>
<svg class="a" style="left:400px;top:81px;" width="14" height="15" viewBox="0 0 14 15"><path d="M2.5 4 V12.5 H6 M2.5 8 H6" stroke="#222" fill="none"/><rect x="0.5" y="0.5" width="6" height="3.5" fill="#f4f0c0" stroke="#b01818"/><rect x="6.5" y="5.5" width="6.5" height="3.5" fill="#f4f0c0" stroke="#b01818"/><rect x="6.5" y="10.5" width="6.5" height="3.5" fill="#f4f0c0" stroke="#b01818"/><rect x="1.5" y="1.5" width="1.5" height="1.5" fill="#e8c000"/><rect x="7.5" y="6.5" width="1.5" height="1.5" fill="#e8c000"/><rect x="7.5" y="11.5" width="1.5" height="1.5" fill="#e8c000"/></svg>
<div class="t" style="left:435.0px;top:84.5px;font-size:10.6px;line-height:10.6px;color:#8a96ae;"><span style="display:inline-block;transform:scaleX(0.9976);transform-origin:0 0">Dashboard Diagram: "TimeSeries"</span></div>
<svg class="a" style="left:1170px;top:84px;" width="11" height="10" viewBox="0 0 11 10"><path d="M0.5 5 L5.5 0.8 L10.5 5 M0.5 9.5 L5.5 5.3 L10.5 9.5" fill="none" stroke="#111" stroke-width="1.5"/></svg>
<svg class="a" style="left:1199px;top:87px;" width="10" height="6" viewBox="0 0 10 6"><path d="M0 0 H10 L5 5z" fill="#111"/></svg>
<svg class="a" style="left:1219px;top:85px;" width="9" height="9" viewBox="0 0 9 9"><path d="M0.8 0.8 L8.2 8.2 M8.2 0.8 L0.8 8.2" stroke="#111" stroke-width="1.6"/></svg>
<svg class="a" style="left:377px;top:105px;" width="17" height="17" viewBox="0 0 17 17"><path d="M8.3 0.9 C10.5 0.9 11.5 2 12.2 3.2 C13.6 3.6 15.6 5 15.6 8.3 C15.6 10.5 14.5 11.6 13.3 12.3 C12.9 13.7 11.5 15.7 8.3 15.7 C6.1 15.7 5 14.6 4.3 13.4 C2.9 13 0.9 11.6 0.9 8.3 C0.9 6.1 2 5 3.2 4.3 C3.6 2.9 5 0.9 8.3 0.9z" fill="#fff" stroke="#2020f0" stroke-width="1.7"/><g fill="#2020f0"><ellipse cx="8.6" cy="4.9" rx="2.5" ry="2"/><ellipse cx="11.7" cy="8.6" rx="2" ry="2.5"/><ellipse cx="8" cy="11.7" rx="2.5" ry="2"/><ellipse cx="4.9" cy="8" rx="2" ry="2.5"/></g></svg>
<div class="t" style="left:395.3px;top:108.6px;font-size:10.8px;line-height:10.8px;color:#1e1e1e;"><span style="display:inline-block;transform:scaleX(0.9994);transform-origin:0 0">Start Page</span></div>
<div class="a" style="left:454px;top:103px;width:109px;height:21px;background:#fff;box-sizing:border-box;border:1px solid #d6d6d6;border-bottom:none;"></div>
<svg class="a" style="left:459px;top:107px;" width="14" height="15" viewBox="0 0 14 15"><path d="M2.5 4 V12.5 H6 M2.5 8 H6" stroke="#222" fill="none"/><rect x="0.5" y="0.5" width="6" height="3.5" fill="#f4f0c0" stroke="#b01818"/><rect x="6.5" y="5.5" width="6.5" height="3.5" fill="#f4f0c0" stroke="#b01818"/><rect x="6.5" y="10.5" width="6.5" height="3.5" fill="#f4f0c0" stroke="#b01818"/><rect x="1.5" y="1.5" width="1.5" height="1.5" fill="#e8c000"/><rect x="7.5" y="6.5" width="1.5" height="1.5" fill="#e8c000"/><rect x="7.5" y="11.5" width="1.5" height="1.5" fill="#e8c000"/></svg>
<div class="t" style="left:476.4px;top:108.6px;font-size:10.8px;line-height:10.8px;color:#1a4a8a;"><span style="display:inline-block;transform:scaleX(1.0204);transform-origin:0 0">*TimeSeries</span></div>
<svg class="a" style="left:548px;top:109px;" width="9" height="9" viewBox="0 0 9 9"><path d="M0.5 0.5 L8.5 8.5 M8.5 0.5 L0.5 8.5" stroke="#444" stroke-width="1.2"/></svg>
<svg class="a" style="left:569px;top:107px;" width="14" height="15" viewBox="0 0 14 15"><path d="M2.5 4 V12.5 H6 M2.5 8 H6" stroke="#222" fill="none"/><rect x="0.5" y="0.5" width="6" height="3.5" fill="#f4f0c0" stroke="#b01818"/><rect x="6.5" y="5.5" width="6.5" height="3.5" fill="#f4f0c0" stroke="#b01818"/><rect x="6.5" y="10.5" width="6.5" height="3.5" fill="#f4f0c0" stroke="#b01818"/><rect x="1.5" y="1.5" width="1.5" height="1.5" fill="#e8c000"/><rect x="7.5" y="6.5" width="1.5" height="1.5" fill="#e8c000"/><rect x="7.5" y="11.5" width="1.5" height="1.5" fill="#e8c000"/></svg>
<div class="t" style="left:586.5px;top:108.6px;font-size:10.8px;line-height:10.8px;color:#1e1e1e;"><span style="display:inline-block;transform:scaleX(1.0059);transform-origin:0 0">Charts</span></div>
<svg class="a" style="left:632px;top:106px;" width="14" height="12" viewBox="0 0 14 12"><rect x="0.5" y="0.5" width="13" height="11" fill="#e8f0ff" stroke="#5070c8"/><path d="M0.5 0.5 L7 7 L13.5 0.5" fill="none" stroke="#5070c8"/></svg>
<div class="t" style="left:648.3px;top:108.6px;font-size:10.8px;line-height:10.8px;color:#1e1e1e;"><span style="display:inline-block;transform:scaleX(1.0823);transform-origin:0 0">Model Mail</span></div>
<svg class="a" style="left:1206px;top:108px;" width="6" height="10" viewBox="0 0 6 10"><path d="M5.5 0.5 L0.5 5 L5.5 9.5z" fill="none" stroke="#888"/></svg>
<svg class="a" style="left:1223px;top:108px;" width="6" height="10" viewBox="0 0 6 10"><path d="M0.5 0.5 L5.5 5 L0.5 9.5z" fill="none" stroke="#888"/></svg>
<div class="a" style="left:374px;top:123px;width:862px;height:1px;background:#e4e4e4;"></div>
<svg class="a" style="left:379px;top:128px;" width="14" height="14" viewBox="0 0 14 14"><text x="0" y="13" font-size="16" font-family="Liberation Serif" fill="#6a70c0">A</text></svg>
<svg class="a" style="left:402px;top:127px;" width="17" height="17" viewBox="0 0 17 17"><text x="0" y="11" font-size="11" font-family="Liberation Sans" fill="#666">A</text><rect x="8" y="1" width="4" height="4" fill="#e080e0"/><rect x="12" y="1" width="4" height="4" fill="#e0d060"/><rect x="10" y="5" width="4" height="4" fill="#60d0d0"/><rect x="1" y="14" width="15" height="2" fill="#ddd"/></svg>
<svg class="a" style="left:424px;top:135px;" width="6" height="4" viewBox="0 0 6 4"><path d="M0 0 H6 L3 3z" fill="#aaa"/></svg>
<svg class="a" style="left:438px;top:127px;" width="16" height="17" viewBox="0 0 16 17"><path d="M2 6 L7 1 L13 7 L8 12z" fill="#c8d8f0" stroke="#555"/><path d="M11 8 V12 H15" stroke="#6080c0" fill="none" stroke-width="1.5"/><rect x="0" y="14" width="15" height="2" fill="#ddd"/></svg>
<svg class="a" style="left:460px;top:135px;" width="6" height="4" viewBox="0 0 6 4"><path d="M0 0 H6 L3 3z" fill="#aaa"/></svg>
<svg class="a" style="left:473px;top:127px;" width="16" height="17" viewBox="0 0 16 17"><path d="M1 8 L15 2" stroke="#888"/><rect x="1" y="9" width="4" height="4" fill="#e080e0"/><rect x="6" y="9" width="4" height="4" fill="#60d0d0"/><rect x="11" y="9" width="4" height="4" fill="#e0d060"/><rect x="1" y="14" width="15" height="2" fill="#ddd"/></svg>
<svg class="a" style="left:495px;top:135px;" width="6" height="4" viewBox="0 0 6 4"><path d="M0 0 H6 L3 3z" fill="#aaa"/></svg>
<div class="a" style="left:507px;top:126px;width:1px;height:20px;background:#cfcfcf;"></div>
<div class="a" style="left:513px;top:127px;width:47px;height:18px;background:#f4f4f4;box-sizing:border-box;border:1px solid #a0a0a0;"></div>
<div class="a" style="left:540px;top:128px;width:19px;height:16px;background:#fff;"></div>
<div class="t" style="left:519.0px;top:131.1px;font-size:10.5px;line-height:10.5px;color:#888;">1</div>
<svg class="a" style="left:545px;top:129px;" width="9" height="13" viewBox="0 0 9 13"><path d="M0.5 4.5 L4.5 0.5 L8.5 4.5 M0.5 8.5 L4.5 12.5 L8.5 8.5" fill="none" stroke="#444" stroke-width="1.2"/></svg>
<svg class="a" style="left:563px;top:127px;" width="17" height="17" viewBox="0 0 17 17"><path d="M2 12 L9 5 L12 8 L5 15z" fill="#f0d050" stroke="#a08020"/><path d="M10 4 L15 0.5 L16.5 2 L13 7z" fill="#6090d0"/><path d="M1 16 H8" stroke="#e8e040" stroke-width="2"/></svg>
<svg class="a" style="left:586px;top:127px;" width="17" height="17" viewBox="0 0 17 17"><path d="M2 15 L10 7 L12 9 L4 17z" fill="#a8d0f0" stroke="#5080b0"/><path d="M10 6 L14 2 L16 4 L12 8z" fill="#5070a0"/></svg>
<div class="a" style="left:610px;top:126px;width:1px;height:20px;background:#cfcfcf;"></div>
<div class="a" style="left:615px;top:126px;width:145px;height:19px;background:#fff;box-sizing:border-box;border:1px solid #a8a8a8;"></div>
<div class="t" style="left:618.3px;top:130.9px;font-size:11.3px;line-height:11.3px;color:#111;"><span style="display:inline-block;transform:scaleX(1.0037);transform-origin:0 0">Default Style</span></div>
<svg class="a" style="left:748px;top:134px;" width="7" height="4" viewBox="0 0 7 4"><path d="M0 0 H7 L3.5 3.5z" fill="#555"/></svg>
<svg class="a" style="left:767px;top:127px;" width="18" height="18" viewBox="0 0 18 18"><rect x="0.5" y="3.5" width="10" height="10" fill="#2040a0"/><rect x="3" y="4" width="5" height="3" fill="#fff"/><path d="M8 16 L15 2 L17 3 L10 17z" fill="#f0c020" stroke="#906000"/></svg>
<svg class="a" style="left:790px;top:134px;" width="7" height="4" viewBox="0 0 7 4"><path d="M0 0 H7 L3.5 3.5z" fill="#666"/></svg>
<div class="a" style="left:802px;top:126px;width:1px;height:20px;background:#cfcfcf;"></div>
<svg class="a" style="left:810px;top:128px;" width="16" height="16" viewBox="0 0 16 16"><g fill="none" stroke="#707070"><path d="M0.5 0 V16"/><rect x="2.5" y="2.5" width="6" height="4"/><rect x="2.5" y="9.5" width="6" height="4"/><path d="M10 4.5 H15 M12 2.5 L10 4.5 L12 6.5 M10 11.5 H15 M12 9.5 L10 11.5 L12 13.5"/></g></svg>
<svg class="a" style="left:831px;top:128px;" width="16" height="16" viewBox="0 0 16 16"><g fill="none" stroke="#707070"><path d="M15.5 0 V16"/><rect x="7.5" y="2.5" width="6" height="4"/><rect x="7.5" y="9.5" width="6" height="4"/><path d="M1 4.5 H6 M4 2.5 L6 4.5 L4 6.5 M1 11.5 H6 M4 9.5 L6 11.5 L4 13.5"/></g></svg>
<svg class="a" style="left:853px;top:128px;" width="16" height="16" viewBox="0 0 16 16"><g fill="none" stroke="#707070"><path d="M0 0.5 H16"/><rect x="2.5" y="2.5" width="4" height="5"/><rect x="9.5" y="2.5" width="4" height="5"/><path d="M4.5 9 V15 M2.5 11 L4.5 9 L6.5 11 M11.5 9 V15 M9.5 11 L11.5 9 L13.5 11"/></g></svg>
<svg class="a" style="left:875px;top:128px;" width="16" height="16" viewBox="0 0 16 16"><g fill="none" stroke="#707070"><path d="M0 15.5 H16"/><rect x="2.5" y="8.5" width="4" height="5"/><rect x="9.5" y="8.5" width="4" height="5"/><path d="M4.5 1 V7 M2.5 5 L4.5 7 L6.5 5 M11.5 1 V7 M9.5 5 L11.5 7 L13.5 5"/></g></svg>
<svg class="a" style="left:897px;top:128px;" width="16" height="16" viewBox="0 0 16 16"><rect x="0.5" y="1.5" width="9" height="8" fill="#fff4c0" stroke="#8a8a8a"/><rect x="5.5" y="6.5" width="9" height="8" fill="#f0dc90" stroke="#8a8a8a"/></svg>
<svg class="a" style="left:919px;top:128px;" width="16" height="16" viewBox="0 0 16 16"><rect x="5.5" y="6.5" width="9" height="8" fill="#f0dc90" stroke="#6a6a8a"/><rect x="0.5" y="1.5" width="9" height="8" fill="#b8c4e8" stroke="#6a6a8a"/></svg>
<div class="a" style="left:943px;top:126px;width:1px;height:20px;background:#cfcfcf;"></div>
<svg class="a" style="left:952px;top:127px;" width="17" height="17" viewBox="0 0 17 17"><g fill="none" stroke="#777"><ellipse cx="8" cy="2.5" rx="3" ry="2"/><ellipse cx="3" cy="13.5" rx="2.5" ry="2"/><ellipse cx="13" cy="13.5" rx="2.5" ry="2"/><ellipse cx="8" cy="8" rx="2.5" ry="2"/><path d="M8 4.5 V6 M3 11.5 V10 H13 V11.5"/></g></svg>
<svg class="a" style="left:973px;top:135px;" width="6" height="4" viewBox="0 0 6 4"><path d="M0 0 H6 L3 3z" fill="#aaa"/></svg>
<svg class="a" style="left:984px;top:127px;" width="17" height="17" viewBox="0 0 17 17"><rect x="0.5" y="4.5" width="11" height="12" fill="#e8f0ff" stroke="#4060b0"/><path d="M2 9 H10 M2 12 H10" stroke="#4060b0"/><path d="M3 7 L11 1 L16 2 L14 6z" fill="#d0d080" stroke="#606040"/></svg>
<div class="a" style="left:1007px;top:126px;width:1px;height:20px;background:#cfcfcf;"></div>
<svg class="a" style="left:1015px;top:129px;" width="14" height="14" viewBox="0 0 14 14"><path d="M1 1 L13 13 M13 1 L1 13" stroke="#e03030" stroke-width="2"/></svg>
<div class="a" style="left:1037px;top:126px;width:1px;height:20px;background:#cfcfcf;"></div>
<div class="a" style="left:1043px;top:127px;width:117px;height:18px;background:#fff;box-sizing:border-box;border:1px solid #a8a8a8;"></div>
<svg class="a" style="left:1165px;top:128px;" width="16" height="15" viewBox="0 0 16 15"><path d="M0.5 0.5 H15.5 L9.5 7 V14.5 H6.5 V7z" fill="#6070d0"/><path d="M2 1.5 H14" stroke="#b0b8f0"/></svg>
<svg class="a" style="left:1224px;top:139px;" width="7" height="4" viewBox="0 0 7 4"><path d="M0 0 H7 L3.5 3.5z" fill="#777"/></svg>
<div class="a" style="left:374px;top:149px;width:847px;height:561px;background:#fff;"></div>
<div class="a" style="left:1221px;top:149px;width:15px;height:561px;background:#e8e8e8;"></div>
<div class="a" style="left:1221px;top:149px;width:1px;height:561px;background:#e2e2e2;"></div>
<div class="a" style="left:1222px;top:150px;width:14px;height:16px;background:#f7f7f7;"></div>
<svg class="a" style="left:1225px;top:155px;" width="9" height="5" viewBox="0 0 9 5"><path d="M0 5 L4.5 0 L9 5z" fill="#606060"/></svg>
<div class="a" style="left:1222px;top:167px;width:14px;height:300px;background:#fafafa;"></div>
<div class="a" style="left:374px;top:710px;width:847px;height:16px;background:#e8e8e8;"></div>
<div class="a" style="left:374px;top:710px;width:847px;height:1px;background:#e2e2e2;"></div>
<div class="a" style="left:375px;top:711px;width:16px;height:15px;background:#f7f7f7;"></div>
<svg class="a" style="left:380px;top:714px;" width="5" height="9" viewBox="0 0 5 9"><path d="M5 0 L0 4.5 L5 9z" fill="#606060"/></svg>
<div class="a" style="left:392px;top:711px;width:730px;height:15px;background:#fafafa;"></div>
<div class="a" style="left:373px;top:727px;width:864px;height:4px;background:#e4e4e4;"></div>
<svg class="a" style="left:0;top:0" width="1920" height="1052" viewBox="0 0 1920 1052"><defs><clipPath id="cv"><rect x="374" y="149" width="847" height="561"/></clipPath></defs><g clip-path="url(#cv)"><path d="M413.3 314.5 H1076.9" stroke="#dadada"/><path d="M413.3 289.5 H1076.9" stroke="#dadada"/><path d="M413.3 264.5 H1076.9" stroke="#dadada"/><path d="M413.3 240.5 H1076.9" stroke="#dadada"/><path d="M413.3 215.5 H1076.9" stroke="#dadada"/><path d="M413.3 190.5 H1076.9" stroke="#dadada"/><path d="M458.5 190.2 V338.4" stroke="#dadada"/><path d="M502.5 190.2 V338.4" stroke="#dadada"/><path d="M546.5 190.2 V338.4" stroke="#dadada"/><path d="M590.5 190.2 V338.4" stroke="#dadada"/><path d="M635.5 190.2 V338.4" stroke="#dadada"/><path d="M679.5 190.2 V338.4" stroke="#dadada"/><path d="M723.5 190.2 V338.4" stroke="#dadada"/><path d="M767.5 190.2 V338.4" stroke="#dadada"/><path d="M812.5 190.2 V338.4" stroke="#dadada"/><path d="M856.5 190.2 V338.4" stroke="#dadada"/><path d="M900.5 190.2 V338.4" stroke="#dadada"/><path d="M944.5 190.2 V338.4" stroke="#dadada"/><path d="M988.5 190.2 V338.4" stroke="#dadada"/><path d="M1033.5 190.2 V338.4" stroke="#dadada"/><path d="M1077.5 190.2 V338.4" stroke="#dadada"/><path d="M1077.5 190.2 V338.4" stroke="#dadada"/><path d="M408.4 338.5 H418.6 M411.2 333.5 H416.4 M411.2 329.5 H416.4 M411.2 324.5 H416.4 M411.2 319.5 H416.4 M408.4 314.5 H418.6 M411.2 309.5 H416.4 M411.2 304.5 H416.4 M411.2 299.5 H416.4 M411.2 294.5 H416.4 M408.4 289.5 H418.6 M411.2 284.5 H416.4 M411.2 279.5 H416.4 M411.2 274.5 H416.4 M411.2 269.5 H416.4 M408.4 264.5 H418.6 M411.2 259.5 H416.4 M411.2 254.5 H416.4 M411.2 249.5 H416.4 M411.2 245.5 H416.4 M408.4 240.5 H418.6 M411.2 235.5 H416.4 M411.2 230.5 H416.4 M411.2 225.5 H416.4 M411.2 220.5 H416.4 M408.4 215.5 H418.6 M411.2 210.5 H416.4 M411.2 205.5 H416.4 M411.2 200.5 H416.4 M411.2 195.5 H416.4 M408.4 190.5 H418.6 M436.5 335.3 V340.3 M458.5 333.4 V343.4 M480.5 335.3 V340.3 M502.5 333.4 V343.4 M524.5 335.3 V340.3 M546.5 333.4 V343.4 M568.5 335.3 V340.3 M590.5 333.4 V343.4 M613.5 335.3 V340.3 M635.5 333.4 V343.4 M657.5 335.3 V340.3 M679.5 333.4 V343.4 M701.5 335.3 V340.3 M723.5 333.4 V343.4 M745.5 335.3 V340.3 M767.5 333.4 V343.4 M789.5 335.3 V340.3 M812.5 333.4 V343.4 M834.5 335.3 V340.3 M856.5 333.4 V343.4 M878.5 335.3 V340.3 M900.5 333.4 V343.4 M922.5 335.3 V340.3 M944.5 333.4 V343.4 M966.5 335.3 V340.3 M988.5 333.4 V343.4 M1011.5 335.3 V340.3 M1033.5 333.4 V343.4 M1055.5 335.3 V340.3 M1077.5 333.4 V343.4 M413.3 333.4 V343.4 M413.3 190.2 V338.4 M408.4 338.4 H1076.9" stroke="#404040" stroke-width="1.2" fill="none"/><polyline points="436.7,236.7 480.9,236.7 525.1,221.8 569.4,202.1 613.6,216.9 657.8,216.9 702.0,236.7 746.2,236.7 790.5,256.4 834.7,291.0 878.9,300.9 923.1,310.8 967.3,320.6 1011.6,320.6 1055.8,320.6" fill="none" stroke="#e4e4e4" stroke-width="1.6"/><polyline points="435.7,234.7 479.9,234.7 524.1,219.8 568.4,200.1 612.6,214.9 656.8,214.9 701.0,234.7 745.2,234.7 789.5,254.4 833.7,289.0 877.9,298.9 922.1,308.8 966.3,318.6 1010.6,318.6 1054.8,318.6" fill="none" stroke="#c05555" stroke-width="1.35"/><polyline points="436.7,281.1 480.9,276.2 525.1,300.9 569.4,325.6 613.6,335.5 657.8,335.5 702.0,330.5 746.2,330.5 790.5,330.5 834.7,330.5 878.9,330.5 923.1,330.5 967.3,330.5 1011.6,340.4 1055.8,340.4" fill="none" stroke="#e4e4e4" stroke-width="1.6"/><polyline points="435.7,279.1 479.9,274.2 524.1,298.9 568.4,323.6 612.6,333.5 656.8,333.5 701.0,328.5 745.2,328.5 789.5,328.5 833.7,328.5 877.9,328.5 922.1,328.5 966.3,328.5 1010.6,338.4 1054.8,338.4" fill="none" stroke="#3f68d0" stroke-width="1.35"/><path d="M1090.4 265.8 H1113" stroke="#3f68d0" stroke-width="1.3"/><path d="M1090.4 280.6 H1113" stroke="#c05555" stroke-width="1.3"/><path d="M418.6 614.5 H1073.2" stroke="#dadada"/><path d="M418.6 580.5 H1073.2" stroke="#dadada"/><path d="M418.6 545.5 H1073.2" stroke="#dadada"/><path d="M418.6 510.5 H1073.2" stroke="#dadada"/><path d="M418.6 476.5 H1073.2" stroke="#dadada"/><path d="M418.6 441.5 H1073.2" stroke="#dadada"/><path d="M418.6 406.5 H1073.2" stroke="#dadada"/><path d="M469.5 406.2 V649.2" stroke="#dadada"/><path d="M519.5 406.2 V649.2" stroke="#dadada"/><path d="M569.5 406.2 V649.2" stroke="#dadada"/><path d="M620.5 406.2 V649.2" stroke="#dadada"/><path d="M670.5 406.2 V649.2" stroke="#dadada"/><path d="M721.5 406.2 V649.2" stroke="#dadada"/><path d="M771.5 406.2 V649.2" stroke="#dadada"/><path d="M821.5 406.2 V649.2" stroke="#dadada"/><path d="M872.5 406.2 V649.2" stroke="#dadada"/><path d="M922.5 406.2 V649.2" stroke="#dadada"/><path d="M972.5 406.2 V649.2" stroke="#dadada"/><path d="M1023.5 406.2 V649.2" stroke="#dadada"/><path d="M1073.5 406.2 V649.2" stroke="#dadada"/><path d="M416.5 649.5 H421.6 M416.5 642.5 H421.6 M416.5 635.5 H421.6 M416.5 628.5 H421.6 M416.5 621.5 H421.6 M416.5 614.5 H421.6 M416.5 608.5 H421.6 M416.5 601.5 H421.6 M416.5 594.5 H421.6 M416.5 587.5 H421.6 M416.5 580.5 H421.6 M416.5 573.5 H421.6 M416.5 566.5 H421.6 M416.5 559.5 H421.6 M416.5 552.5 H421.6 M416.5 545.5 H421.6 M416.5 538.5 H421.6 M416.5 531.5 H421.6 M416.5 524.5 H421.6 M416.5 517.5 H421.6 M416.5 510.5 H421.6 M416.5 503.5 H421.6 M416.5 496.5 H421.6 M416.5 490.5 H421.6 M416.5 483.5 H421.6 M416.5 476.5 H421.6 M416.5 469.5 H421.6 M416.5 462.5 H421.6 M416.5 455.5 H421.6 M416.5 448.5 H421.6 M416.5 441.5 H421.6 M416.5 434.5 H421.6 M416.5 427.5 H421.6 M416.5 420.5 H421.6 M416.5 413.5 H421.6 M416.5 406.5 H421.6 M413.7 649.5 H423.9 M413.7 614.5 H423.9 M413.7 580.5 H423.9 M413.7 545.5 H423.9 M413.7 510.5 H423.9 M413.7 476.5 H423.9 M413.7 441.5 H423.9 M413.7 406.5 H423.9 M444.5 646.2 V651.2 M469.5 644.2 V654.2 M494.5 646.2 V651.2 M519.5 644.2 V654.2 M544.5 646.2 V651.2 M569.5 644.2 V654.2 M595.5 646.2 V651.2 M620.5 644.2 V654.2 M645.5 646.2 V651.2 M670.5 644.2 V654.2 M695.5 646.2 V651.2 M721.5 644.2 V654.2 M746.5 646.2 V651.2 M771.5 644.2 V654.2 M796.5 646.2 V651.2 M821.5 644.2 V654.2 M847.5 646.2 V651.2 M872.5 644.2 V654.2 M897.5 646.2 V651.2 M922.5 644.2 V654.2 M947.5 646.2 V651.2 M972.5 644.2 V654.2 M998.5 646.2 V651.2 M1023.5 644.2 V654.2 M1048.5 646.2 V651.2 M1073.5 644.2 V654.2 M418.6 644.2 V654.2 M418.6 406.2 V649.2 M413.7 649.2 H1074.2" stroke="#404040" stroke-width="1.2" fill="none"/><path d="M443.5 449.1 C451.9 449.9 477.1 451.0 493.9 454.3 C510.7 457.5 527.5 467.8 544.3 468.5 C561.1 469.2 577.8 465.1 594.6 458.4 C611.4 451.8 628.2 429.8 645.0 428.4 C661.8 427.0 678.6 435.5 695.4 449.9 C712.2 464.4 729.0 501.9 745.8 515.2 C762.6 528.5 779.4 531.6 796.2 529.6 C813.0 527.6 829.7 502.0 846.5 503.1 C863.3 504.2 880.1 528.9 896.9 536.2 C913.7 543.5 930.5 547.3 947.3 546.6 C964.1 546.0 980.9 533.6 997.7 532.2 C1014.5 530.8 1039.7 537.1 1048.1 538.1" fill="none" stroke="#b45a5a" stroke-width="1.1"/><path d="M443.5 451.3 C451.9 455.2 477.1 465.6 493.9 474.8 C510.7 483.9 527.5 500.9 544.3 506.2 C561.1 511.4 577.8 510.7 594.6 506.2 C611.4 501.7 628.2 480.2 645.0 479.1 C661.8 478.0 678.6 482.9 695.4 499.6 C712.2 516.3 729.0 565.0 745.8 579.4 C762.6 593.9 779.4 587.0 796.2 586.4 C813.0 585.7 829.7 570.7 846.5 575.4 C863.3 580.1 880.1 605.9 896.9 614.7 C913.7 623.5 930.5 628.2 947.3 628.2 C964.1 628.2 980.9 616.1 997.7 614.7 C1014.5 613.2 1039.7 618.6 1048.1 619.3" fill="none" stroke="#4a6cc8" stroke-width="1.1"/><path d="M443.5 466.4 C451.9 470.2 477.1 481.2 493.9 489.2 C510.7 497.1 527.5 509.4 544.3 514.0 C561.1 518.6 577.8 520.4 594.6 516.6 C611.4 512.8 628.2 492.1 645.0 491.3 C661.8 490.4 678.6 494.5 695.4 511.4 C712.2 528.3 729.0 577.9 745.8 592.4 C762.6 607.0 779.4 600.9 796.2 598.5 C813.0 596.1 829.7 575.0 846.5 578.0 C863.3 581.1 880.1 608.2 896.9 616.7 C913.7 625.3 930.5 629.4 947.3 629.6 C964.1 629.8 980.9 618.3 997.7 617.8 C1014.5 617.3 1039.7 625.0 1048.1 626.5" fill="none" stroke="#d4a448" stroke-width="1.1"/><path d="M443.5 545.4 C451.9 543.9 477.1 533.9 493.9 536.2 C510.7 538.5 527.5 558.7 544.3 558.9 C561.1 559.2 577.8 544.9 594.6 537.6 C611.4 530.3 628.2 514.1 645.0 515.2 C661.8 516.3 678.6 527.9 695.4 544.0 C712.2 560.2 729.0 599.5 745.8 612.1 C762.6 624.6 779.4 622.8 796.2 619.3 C813.0 615.9 829.7 589.5 846.5 591.6 C863.3 593.6 880.1 623.0 896.9 631.7 C913.7 640.3 930.5 643.5 947.3 643.5 C964.1 643.5 980.9 632.2 997.7 631.7 C1014.5 631.1 1039.7 638.9 1048.1 640.3" fill="none" stroke="#9a44e6" stroke-width="1.1"/><path d="M443.5 604.2 C451.9 603.9 477.1 595.9 493.9 602.2 C510.7 608.5 527.5 639.5 544.3 642.1 C561.1 644.7 577.8 620.6 594.6 617.8 C611.4 614.9 628.2 622.2 645.0 625.1 C661.8 628.0 678.6 633.5 695.4 635.1 C712.2 636.8 729.0 634.2 745.8 635.1 C762.6 636.1 779.4 644.4 796.2 640.9 C813.0 637.4 829.7 613.0 846.5 614.1 C863.3 615.2 880.1 641.7 896.9 647.5 C913.7 653.2 930.5 648.9 947.3 648.7 C964.1 648.4 980.9 646.3 997.7 646.1 C1014.5 645.9 1039.7 647.2 1048.1 647.5" fill="none" stroke="#5b6c3e" stroke-width="1.1"/><path d="M443.5 609.5 C451.9 611.0 477.1 613.2 493.9 618.7 C510.7 624.1 527.5 640.0 544.3 642.1 C561.1 644.2 577.8 632.9 594.6 631.1 C611.4 629.4 628.2 630.7 645.0 631.7 C661.8 632.6 678.6 636.0 695.4 636.9 C712.2 637.7 729.0 636.2 745.8 636.9 C762.6 637.5 779.4 643.8 796.2 640.9 C813.0 637.9 829.7 618.1 846.5 619.3 C863.3 620.6 880.1 643.3 896.9 648.2 C913.7 653.0 930.5 649.0 947.3 648.7 C964.1 648.3 980.9 646.2 997.7 646.1 C1014.5 646.0 1039.7 647.7 1048.1 648.0" fill="none" stroke="#d46464" stroke-width="1.1"/><path d="M443.5 640.3 C451.9 640.1 477.1 637.9 493.9 638.8 C510.7 639.7 527.5 644.7 544.3 645.6 C561.1 646.5 577.8 643.9 594.6 644.2 C611.4 644.5 628.2 646.8 645.0 647.3 C661.8 647.8 678.6 647.6 695.4 647.3 C712.2 647.0 729.0 645.8 745.8 645.6 C762.6 645.3 779.4 645.3 796.2 645.6 C813.0 645.8 829.7 647.0 846.5 647.3 C863.3 647.6 880.1 647.2 896.9 647.3 C913.7 647.4 930.5 648.0 947.3 647.8 C964.1 647.6 980.9 646.1 997.7 646.1 C1014.5 646.1 1039.7 647.5 1048.1 647.8" fill="none" stroke="#5a7ee0" stroke-width="1.1"/><path d="M1087.7 490.5 H1110.6" stroke="#4a6cd8" stroke-width="1.3"/><path d="M1087.7 505.9 H1110.6" stroke="#d46464" stroke-width="1.3"/><path d="M1087.7 521.7 H1110.6" stroke="#5b6c3e" stroke-width="1.3"/><path d="M1087.7 537.7 H1110.6" stroke="#9a44e6" stroke-width="1.3"/><path d="M1087.7 552.8 H1110.6" stroke="#d4a448" stroke-width="1.3"/><path d="M1087.7 568.6 H1110.6" stroke="#4a6cc8" stroke-width="1.3"/><path d="M1087.7 584.7 H1110.6" stroke="#b45a5a" stroke-width="1.3"/><rect x="377.5" y="145.5" width="7" height="7" fill="#fff" stroke="#111" stroke-width="1.3"/><rect x="776.5" y="145.5" width="7" height="7" fill="#fff" stroke="#111" stroke-width="1.3"/><rect x="1176.5" y="145.5" width="7" height="7" fill="#fff" stroke="#111" stroke-width="1.3"/><rect x="377.5" y="255.1" width="7" height="7" fill="#fff" stroke="#111" stroke-width="1.3"/><rect x="1176.5" y="255.5" width="7" height="7" fill="#fff" stroke="#111" stroke-width="1.3"/><rect x="377.5" y="366.5" width="7" height="7" fill="#fff" stroke="#111" stroke-width="1.3"/><rect x="776.5" y="366.5" width="7" height="7" fill="#fff" stroke="#111" stroke-width="1.3"/><rect x="1176.5" y="366.5" width="7" height="7" fill="#fff" stroke="#111" stroke-width="1.3"/><path d="M1192 149.5 H1202 M1197 149.5 V159" stroke="#111" stroke-width="1.4"/><path d="M1191 171 L1195 166.5 L1200 166 L1202 170 L1197 175 Z M1200 166.5 L1204 162" fill="none" stroke="#111" stroke-width="1.1"/><circle cx="1196" cy="185" r="4.2" fill="none" stroke="#111" stroke-width="1.3"/><path d="M1199 188 L1203 192.5" stroke="#111" stroke-width="2"/></g></svg>
<div class="t" style="left:380.4px;width:800px;text-align:center;top:161.6px;font-size:13.5px;line-height:13.5px;color:#111;"><span style="display:inline-block;transform:scaleX(0.9990);transform-origin:50% 0">Changes awaiting checkin</span></div>
<div class="t" style="right:1515.0px;top:334.3px;font-size:8.6px;line-height:8.6px;color:#111;">0</div>
<div class="t" style="right:1515.0px;top:309.6px;font-size:8.6px;line-height:8.6px;color:#111;">5</div>
<div class="t" style="right:1515.0px;top:284.9px;font-size:8.6px;line-height:8.6px;color:#111;">10</div>
<div class="t" style="right:1515.0px;top:260.2px;font-size:8.6px;line-height:8.6px;color:#111;">15</div>
<div class="t" style="right:1515.0px;top:235.5px;font-size:8.6px;line-height:8.6px;color:#111;">20</div>
<div class="t" style="right:1515.0px;top:210.8px;font-size:8.6px;line-height:8.6px;color:#111;">25</div>
<div class="t" style="right:1515.0px;top:186.1px;font-size:8.6px;line-height:8.6px;color:#111;">30</div>
<div class="t" style="left:35.7px;width:800px;text-align:center;top:346.5px;font-size:8.6px;line-height:8.6px;color:#111;"><span style="display:inline-block;transform:scaleX(1.1246);transform-origin:50% 0">3/08/2015</span></div>
<div class="t" style="left:124.1px;width:800px;text-align:center;top:346.5px;font-size:8.6px;line-height:8.6px;color:#111;"><span style="display:inline-block;transform:scaleX(1.1246);transform-origin:50% 0">5/08/2015</span></div>
<div class="t" style="left:212.6px;width:800px;text-align:center;top:346.5px;font-size:8.6px;line-height:8.6px;color:#111;"><span style="display:inline-block;transform:scaleX(1.1246);transform-origin:50% 0">7/08/2015</span></div>
<div class="t" style="left:301.0px;width:800px;text-align:center;top:346.5px;font-size:8.6px;line-height:8.6px;color:#111;"><span style="display:inline-block;transform:scaleX(1.1445);transform-origin:50% 0">11/08/2015</span></div>
<div class="t" style="left:389.5px;width:800px;text-align:center;top:346.5px;font-size:8.6px;line-height:8.6px;color:#111;"><span style="display:inline-block;transform:scaleX(1.1275);transform-origin:50% 0">13/08/2015</span></div>
<div class="t" style="left:477.9px;width:800px;text-align:center;top:346.5px;font-size:8.6px;line-height:8.6px;color:#111;"><span style="display:inline-block;transform:scaleX(1.1275);transform-origin:50% 0">17/08/2015</span></div>
<div class="t" style="left:566.3px;width:800px;text-align:center;top:346.5px;font-size:8.6px;line-height:8.6px;color:#111;"><span style="display:inline-block;transform:scaleX(1.1275);transform-origin:50% 0">19/08/2015</span></div>
<div class="t" style="left:654.8px;width:800px;text-align:center;top:346.5px;font-size:8.6px;line-height:8.6px;color:#111;"><span style="display:inline-block;transform:scaleX(1.1275);transform-origin:50% 0">21/08/2015</span></div>
<div class="t" style="left:1117.6px;top:262.0px;font-size:8.8px;line-height:8.8px;color:#111;"><span style="display:inline-block;transform:scaleX(1.0153);transform-origin:0 0">Not Ready</span></div>
<div class="t" style="left:1117.6px;top:276.9px;font-size:8.8px;line-height:8.8px;color:#111;"><span style="display:inline-block;transform:scaleX(0.9828);transform-origin:0 0">Ready</span></div>
<div class="t" style="left:380.5px;width:800px;text-align:center;top:377.4px;font-size:13.5px;line-height:13.5px;color:#111;"><span style="display:inline-block;transform:scaleX(0.9852);transform-origin:50% 0">Tests by result</span></div>
<div class="t" style="right:1509.0px;top:645.1px;font-size:8.6px;line-height:8.6px;color:#111;">0</div>
<div class="t" style="right:1509.0px;top:610.4px;font-size:8.6px;line-height:8.6px;color:#111;">20</div>
<div class="t" style="right:1509.0px;top:575.7px;font-size:8.6px;line-height:8.6px;color:#111;">40</div>
<div class="t" style="right:1509.0px;top:541.0px;font-size:8.6px;line-height:8.6px;color:#111;">60</div>
<div class="t" style="right:1509.0px;top:506.3px;font-size:8.6px;line-height:8.6px;color:#111;">80</div>
<div class="t" style="right:1509.0px;top:471.6px;font-size:8.6px;line-height:8.6px;color:#111;">100</div>
<div class="t" style="right:1509.0px;top:436.8px;font-size:8.6px;line-height:8.6px;color:#111;">120</div>
<div class="t" style="right:1509.0px;top:402.1px;font-size:8.6px;line-height:8.6px;color:#111;">140</div>
<div class="t" style="left:43.5px;width:800px;text-align:center;top:657.6px;font-size:8.6px;line-height:8.6px;color:#111;"><span style="display:inline-block;transform:scaleX(1.1403);transform-origin:50% 0">3/08/2015</span></div>
<div class="t" style="left:93.9px;width:800px;text-align:center;top:657.6px;font-size:8.6px;line-height:8.6px;color:#111;"><span style="display:inline-block;transform:scaleX(1.1403);transform-origin:50% 0">4/08/2015</span></div>
<div class="t" style="left:144.3px;width:800px;text-align:center;top:657.6px;font-size:8.6px;line-height:8.6px;color:#111;"><span style="display:inline-block;transform:scaleX(1.1403);transform-origin:50% 0">5/08/2015</span></div>
<div class="t" style="left:194.6px;width:800px;text-align:center;top:657.6px;font-size:8.6px;line-height:8.6px;color:#111;"><span style="display:inline-block;transform:scaleX(1.1403);transform-origin:50% 0">6/08/2015</span></div>
<div class="t" style="left:245.0px;width:800px;text-align:center;top:657.6px;font-size:8.6px;line-height:8.6px;color:#111;"><span style="display:inline-block;transform:scaleX(1.1403);transform-origin:50% 0">7/08/2015</span></div>
<div class="t" style="left:295.4px;width:800px;text-align:center;top:657.6px;font-size:8.6px;line-height:8.6px;color:#111;"><span style="display:inline-block;transform:scaleX(1.1275);transform-origin:50% 0">10/08/2015</span></div>
<div class="t" style="left:345.8px;width:800px;text-align:center;top:657.6px;font-size:8.6px;line-height:8.6px;color:#111;"><span style="display:inline-block;transform:scaleX(1.1445);transform-origin:50% 0">11/08/2015</span></div>
<div class="t" style="left:396.2px;width:800px;text-align:center;top:657.6px;font-size:8.6px;line-height:8.6px;color:#111;"><span style="display:inline-block;transform:scaleX(1.1275);transform-origin:50% 0">12/08/2015</span></div>
<div class="t" style="left:446.5px;width:800px;text-align:center;top:657.6px;font-size:8.6px;line-height:8.6px;color:#111;"><span style="display:inline-block;transform:scaleX(1.1275);transform-origin:50% 0">13/08/2015</span></div>
<div class="t" style="left:496.9px;width:800px;text-align:center;top:657.6px;font-size:8.6px;line-height:8.6px;color:#111;"><span style="display:inline-block;transform:scaleX(1.1275);transform-origin:50% 0">14/08/2015</span></div>
<div class="t" style="left:547.3px;width:800px;text-align:center;top:657.6px;font-size:8.6px;line-height:8.6px;color:#111;"><span style="display:inline-block;transform:scaleX(1.1275);transform-origin:50% 0">17/08/2015</span></div>
<div class="t" style="left:597.7px;width:800px;text-align:center;top:657.6px;font-size:8.6px;line-height:8.6px;color:#111;"><span style="display:inline-block;transform:scaleX(1.1275);transform-origin:50% 0">18/08/2015</span></div>
<div class="t" style="left:648.1px;width:800px;text-align:center;top:657.6px;font-size:8.6px;line-height:8.6px;color:#111;"><span style="display:inline-block;transform:scaleX(1.1275);transform-origin:50% 0">19/08/2015</span></div>
<div class="t" style="left:1114.7px;top:486.4px;font-size:8.8px;line-height:8.8px;color:#111;"><span style="display:inline-block;transform:scaleX(1.0099);transform-origin:0 0">No Tests</span></div>
<div class="t" style="left:1114.7px;top:501.8px;font-size:8.8px;line-height:8.8px;color:#111;"><span style="display:inline-block;transform:scaleX(0.9324);transform-origin:0 0">Not Run</span></div>
<div class="t" style="left:1114.7px;top:517.6px;font-size:8.8px;line-height:8.8px;color:#111;"><span style="display:inline-block;transform:scaleX(0.9930);transform-origin:0 0">Re-Test</span></div>
<div class="t" style="left:1114.7px;top:533.6px;font-size:8.8px;line-height:8.8px;color:#111;"><span style="display:inline-block;transform:scaleX(0.9993);transform-origin:0 0">Incomplete</span></div>
<div class="t" style="left:1114.7px;top:548.7px;font-size:8.8px;line-height:8.8px;color:#111;"><span style="display:inline-block;transform:scaleX(1.2123);transform-origin:0 0">Fail</span></div>
<div class="t" style="left:1114.7px;top:564.5px;font-size:8.8px;line-height:8.8px;color:#111;"><span style="display:inline-block;transform:scaleX(0.9376);transform-origin:0 0">Expected</span></div>
<div class="t" style="left:1114.7px;top:580.6px;font-size:8.8px;line-height:8.8px;color:#111;"><span style="display:inline-block;transform:scaleX(1.0048);transform-origin:0 0">Deferred</span></div>
<div class="t" style="left:1245.0px;top:81.9px;font-size:19px;line-height:19px;color:#1e1e1e;"><span style="display:inline-block;transform:scaleX(1.0053);transform-origin:0 0">Specification Manager</span></div>
<svg class="a" style="left:1842px;top:89px;" width="10" height="6" viewBox="0 0 10 6"><path d="M0 0 H10 L5 5z" fill="#666"/></svg>
<svg class="a" style="left:1860px;top:86px;" width="9" height="11" viewBox="0 0 9 11"><path d="M2.5 0.5 H6.5 V6.5 H2.5z" fill="none" stroke="#666"/><rect x="5" y="0" width="2" height="7" fill="#666"/><path d="M0.5 7 H8.5 M4.5 7 V11" stroke="#666" stroke-width="1.2"/></svg>
<svg class="a" style="left:1876px;top:87.5px;" width="9" height="9" viewBox="0 0 9 9"><path d="M0.8 0.8 L8.2 8.2 M8.2 0.8 L0.8 8.2" stroke="#666" stroke-width="1.3"/></svg>
<div class="t" style="left:1241.0px;top:114.9px;font-size:10.75px;line-height:10.75px;color:#8c8c8c;"><span style="display:inline-block;transform:scaleX(0.9992);transform-origin:0 0">Specification Manager::  Package: "Manage Users"  [ Change ]</span></div>
<svg class="a" style="left:1245px;top:148px;" width="17" height="17" viewBox="0 0 17 17"><circle cx="8" cy="8" r="8" fill="#1a7ac4"/><path d="M12 8 H4.5 M8 4.5 L4.5 8 L8 11.5" stroke="#fff" stroke-width="2" fill="none"/></svg>
<svg class="a" style="left:1267px;top:148px;" width="17" height="17" viewBox="0 0 17 17"><circle cx="8" cy="8" r="8" fill="#8ec4e4"/><path d="M4 8 H11.5 M8 4.5 L11.5 8 L8 11.5" stroke="#fff" stroke-width="2" fill="none"/></svg>
<div class="a" style="left:1289px;top:147px;width:344px;height:20px;background:#fff;"></div>
<svg class="a" style="left:1292px;top:153px;" width="10" height="8" viewBox="0 0 10 8"><path d="M4.5 0.5 L1 4 L4.5 7.5 M9 0.5 L5.5 4 L9 7.5" fill="none" stroke="#111" stroke-width="1.3"/></svg>
<div class="t" style="left:1309.0px;top:153.0px;font-size:10.45px;line-height:10.45px;color:#222;"><span style="display:inline-block;transform:scaleX(0.9977);transform-origin:0 0">Help Assets</span></div>
<svg class="a" style="left:1373px;top:153px;" width="5" height="8" viewBox="0 0 5 8"><path d="M0 0 L5 4 L0 8z" fill="#111"/></svg>
<div class="t" style="left:1388.0px;top:153.0px;font-size:10.45px;line-height:10.45px;color:#222;"><span style="display:inline-block;transform:scaleX(1.0013);transform-origin:0 0">Diagram Legends</span></div>
<svg class="a" style="left:1479px;top:153px;" width="5" height="8" viewBox="0 0 5 8"><path d="M0 0 L5 4 L0 8z" fill="#111"/></svg>
<div class="t" style="left:1494.0px;top:153.0px;font-size:10.45px;line-height:10.45px;color:#222;"><span style="display:inline-block;transform:scaleX(1.0018);transform-origin:0 0">Manage Users</span></div>
<div class="a" style="left:1638px;top:146px;width:246px;height:22px;background:#fff;box-sizing:border-box;border:1px solid #a9a9a9;"></div>
<div class="t" style="left:1640.0px;top:151.7px;font-size:11px;line-height:11px;color:#777;">Find Package</div>
<div class="a" style="left:1242px;top:184px;width:648px;height:520px;background:#fff;box-sizing:border-box;border:1px solid #d0d0d0;"></div>
<div class="a" style="left:1244px;top:186px;width:628px;height:30px;background:#d7e4f5;"></div>
<div class="a" style="left:1244px;top:186px;width:628px;height:1px;background:#c0c8d8;"></div>
<div class="a" style="left:1244px;top:215px;width:628px;height:2px;background:#b8c4d4;"></div>
<div class="a" style="left:1757px;top:186px;width:2px;height:30px;background:#b8c4d4;"></div>
<div class="a" style="left:1843px;top:186px;width:2px;height:30px;background:#b8c4d4;"></div>
<div class="t" style="left:1248.5px;top:195.6px;font-size:12.9px;line-height:12.9px;color:#111;"><span style="display:inline-block;transform:scaleX(0.9969);transform-origin:0 0">Item</span></div>
<div class="t" style="left:1763.5px;top:195.6px;font-size:12.9px;line-height:12.9px;color:#111;"><span style="display:inline-block;transform:scaleX(1.0261);transform-origin:0 0">Status</span></div>
<div class="a" style="left:1848px;top:190px;width:24px;height:22px;overflow:hidden"><div class="t" style="left:0.5px;top:5.6px;font-size:12.9px;line-height:12.9px;color:#111;">Priority</div>
</div>
<div class="a" style="left:1872px;top:186px;width:16px;height:500px;background:#e8e8e8;"></div>
<div class="a" style="left:1873px;top:187px;width:14px;height:15px;background:#f7f7f7;"></div>
<svg class="a" style="left:1876px;top:192px;" width="9" height="5" viewBox="0 0 9 5"><path d="M0 5 L4.5 0 L9 5z" fill="#606060"/></svg>
<div class="a" style="left:1873px;top:298px;width:14px;height:162px;background:#f9f9f9;"></div>
<div class="a" style="left:1873px;top:670px;width:14px;height:15px;background:#f7f7f7;"></div>
<svg class="a" style="left:1876px;top:675px;" width="9" height="5" viewBox="0 0 9 5"><path d="M0 0 L4.5 5 L9 0z" fill="#606060"/></svg>
<div class="a" style="left:1244px;top:686px;width:628px;height:16px;background:#e8e8e8;"></div>
<div class="a" style="left:1244px;top:687px;width:560px;height:14px;background:#f9f9f9;"></div>
<div class="a" style="left:1857px;top:687px;width:14px;height:14px;background:#f7f7f7;"></div>
<svg class="a" style="left:1862px;top:690px;" width="5" height="9" viewBox="0 0 5 9"><path d="M0 0 L5 4.5 L0 9z" fill="#606060"/></svg>
<div class="a" style="left:1872px;top:686px;width:16px;height:16px;background:#f0f0f0;"></div>
<div class="t" style="left:1311.0px;top:230.5px;font-size:15.6px;line-height:15.6px;color:#111;font-weight:700;"><span style="display:inline-block;transform:scaleX(0.9983);transform-origin:0 0">REQ018 - Report on User Account</span></div>
<div class="t" style="left:1314.0px;top:255.6px;font-size:14px;line-height:14px;color:#111;"><span style="display:inline-block;transform:scaleX(0.9965);transform-origin:0 0">A report is required covering all details of a user's account including</span></div>
<div class="t" style="left:1314.0px;top:273.6px;font-size:14px;line-height:14px;color:#111;"><span style="display:inline-block;transform:scaleX(1.0041);transform-origin:0 0">current open transactions, transaction history and activity.</span></div>
<div class="t" style="left:1760.5px;top:230.7px;font-size:13.4px;line-height:13.4px;color:#222;"><span style="display:inline-block;transform:scaleX(1.0013);transform-origin:0 0">Proposed</span></div>
<div class="a" style="left:1847px;top:228px;width:25px;height:20px;overflow:hidden"><div class="t" style="left:0.0px;top:2.7px;font-size:13.4px;line-height:13.4px;color:#222;">Medium</div>
</div>
<div class="a" style="left:1244px;top:308px;width:8px;height:378px;background:linear-gradient(to right,#e6e6e6,#b8b8b8 70%,#d8d8d8);"></div>
<div class="a" style="left:1281px;top:349px;width:1px;height:337px;background:#ececec;"></div>
<div class="t" style="left:1288.5px;top:320.9px;font-size:19.7px;line-height:19.7px;color:#111;font-weight:700;"><span style="display:inline-block;transform:scaleX(1.0026);transform-origin:0 0">REQ024 - Secure Access</span></div>
<div class="t" style="left:1760.5px;top:319.7px;font-size:13.4px;line-height:13.4px;color:#222;"><span style="display:inline-block;transform:scaleX(1.0013);transform-origin:0 0">Proposed</span></div>
<div class="a" style="left:1847px;top:317px;width:25px;height:20px;overflow:hidden"><div class="t" style="left:0.0px;top:2.7px;font-size:13.4px;line-height:13.4px;color:#222;">High</div>
</div>
<div class="t" style="left:1289.0px;top:352.6px;font-size:13.5px;line-height:13.5px;color:#111;"><span style="display:inline-block;transform:scaleX(1.0022);transform-origin:0 0">All user access is to be secure and encrypted.</span></div>
<div class="t" style="left:1289.0px;top:370.6px;font-size:13.5px;line-height:13.5px;color:#111;"><span style="display:inline-block;transform:scaleX(1.0500);transform-origin:0 0">Security will come from one of:</span></div>
<div class="a" style="left:1290px;top:393px;width:5px;height:5px;background:#111;border-radius:50%;"></div>
<div class="t" style="left:1313.0px;top:388.6px;font-size:13.5px;line-height:13.5px;color:#0000ee;"><span style="display:inline-block;transform:scaleX(0.9784);transform-origin:0 0">Password</span></div>
<div class="a" style="left:1313px;top:402px;width:58px;height:1px;background:#0000ee;"></div>
<div class="a" style="left:1290px;top:411px;width:5px;height:5px;background:#111;border-radius:50%;"></div>
<div class="t" style="left:1313.0px;top:406.6px;font-size:13.5px;line-height:13.5px;color:#0000ee;"><span style="display:inline-block;transform:scaleX(0.9343);transform-origin:0 0">Access Card</span></div>
<div class="a" style="left:1313px;top:420px;width:71.5px;height:1px;background:#0000ee;"></div>
<div class="a" style="left:1290px;top:429px;width:5px;height:5px;background:#111;border-radius:50%;"></div>
<div class="t" style="left:1313.0px;top:424.6px;font-size:13.5px;line-height:13.5px;color:#ee0000;"><span style="display:inline-block;transform:scaleX(0.9994);transform-origin:0 0">Fingerprint Scan</span></div>
<div class="t" style="left:1289.0px;top:460.6px;font-size:13.5px;line-height:13.5px;color:#111;"><span style="display:inline-block;transform:scaleX(1.0168);transform-origin:0 0">The password will be secure.</span></div>
<div class="t" style="left:1760.5px;top:505.7px;font-size:13.4px;line-height:13.4px;color:#222;"><span style="display:inline-block;transform:scaleX(1.0013);transform-origin:0 0">Proposed</span></div>
<div class="a" style="left:1847px;top:503px;width:25px;height:20px;overflow:hidden"><div class="t" style="left:0.0px;top:2.7px;font-size:13.4px;line-height:13.4px;color:#222;">Medium</div>
</div>
<div class="t" style="left:1760.5px;top:619.7px;font-size:13.4px;line-height:13.4px;color:#222;"><span style="display:inline-block;transform:scaleX(1.0120);transform-origin:0 0">Validated</span></div>
<div class="a" style="left:1847px;top:617px;width:25px;height:20px;overflow:hidden"><div class="t" style="left:0.0px;top:2.7px;font-size:13.4px;line-height:13.4px;color:#222;">Medium</div>
</div>
<div class="a" style="left:1237px;top:727px;width:652px;height:4px;background:#e4e4e4;"></div>
<div class="t" style="left:378.0px;top:739.1px;font-size:18.75px;line-height:18.75px;color:#1e1e1e;"><span style="display:inline-block;transform:scaleX(1.0004);transform-origin:0 0">Project Gantt View</span></div>
<svg class="a" style="left:1842px;top:746px;" width="10" height="6" viewBox="0 0 10 6"><path d="M0 0 H10 L5 5z" fill="#666"/></svg>
<svg class="a" style="left:1860px;top:743px;" width="9" height="11" viewBox="0 0 9 11"><path d="M2.5 0.5 H6.5 V6.5 H2.5z" fill="none" stroke="#666"/><rect x="5" y="0" width="2" height="7" fill="#666"/><path d="M0.5 7 H8.5 M4.5 7 V11" stroke="#666" stroke-width="1.2"/></svg>
<svg class="a" style="left:1876px;top:744.5px;" width="9" height="9" viewBox="0 0 9 9"><path d="M0.8 0.8 L8.2 8.2 M8.2 0.8 L0.8 8.2" stroke="#666" stroke-width="1.3"/></svg>
<div class="a" style="left:376px;top:769px;width:471px;height:240px;background:#fff;box-sizing:border-box;border:1px solid #b8b8b8;"></div>
<div class="a" style="left:377px;top:770px;width:469px;height:40px;background:#d7e4f5;"></div>
<div class="a" style="left:377px;top:809px;width:469px;height:2px;background:#a9b0ba;"></div>
<div class="a" style="left:510px;top:770px;width:2px;height:40px;background:#b0b8c4;"></div>
<div class="a" style="left:622px;top:770px;width:2px;height:40px;background:#b0b8c4;"></div>
<div class="a" style="left:734px;top:770px;width:2px;height:40px;background:#b0b8c4;"></div>
<div class="t" style="left:404.3px;top:784.8px;font-size:11.2px;line-height:11.2px;color:#111;"><span style="display:inline-block;transform:scaleX(1.0336);transform-origin:0 0">Resource</span></div>
<div class="t" style="left:516.0px;top:784.8px;font-size:11.2px;line-height:11.2px;color:#111;"><span style="display:inline-block;transform:scaleX(1.0719);transform-origin:0 0">Status</span></div>
<div class="t" style="left:628.0px;top:784.8px;font-size:11.2px;line-height:11.2px;color:#111;"><span style="display:inline-block;transform:scaleX(1.0729);transform-origin:0 0">Role or Task</span></div>
<div class="t" style="left:740.0px;top:784.8px;font-size:11.2px;line-height:11.2px;color:#111;"><span style="display:inline-block;transform:scaleX(1.1067);transform-origin:0 0">Complete</span></div>
<svg class="a" style="left:424px;top:816.4px;" width="15" height="12" viewBox="0 0 15 12"><defs><linearGradient id="rq" x1="0" x2="0" y1="0" y2="1"><stop offset="0" stop-color="#f8a0b0"/><stop offset="1" stop-color="#c01020"/></linearGradient></defs><rect x="0.5" y="0.5" width="13.5" height="10" fill="#d4e0f2" stroke="#303040"/><rect x="1" y="1" width="2.6" height="9" fill="url(#rq)"/><path d="M5.5 5.5 L7.5 8 L11.5 2.5" stroke="#108a30" stroke-width="1.4" fill="none"/></svg>
<div class="t" style="left:441.0px;top:816.9px;font-size:11.2px;line-height:11.2px;color:#111;">REQ011 - ...</div>
<div class="t" style="left:513.8px;top:816.9px;font-size:11.2px;line-height:11.2px;color:#111;">Validated</div>
<div class="t" style="left:626.0px;top:816.9px;font-size:11.2px;line-height:11.2px;color:#111;">Developer</div>
<div class="t" style="right:1077.2px;top:816.9px;font-size:11.2px;line-height:11.2px;color:#111;">0 %</div>
<svg class="a" style="left:424px;top:840.4px;" width="15" height="11" viewBox="0 0 15 11"><ellipse cx="7.5" cy="5.5" rx="6.8" ry="4.8" fill="#a8c4f0" stroke="#3050a0"/><ellipse cx="5.5" cy="4" rx="2.5" ry="1.5" fill="#e0ecff"/></svg>
<div class="t" style="left:441.0px;top:839.9px;font-size:11.2px;line-height:11.2px;color:#111;">Login</div>
<div class="t" style="left:513.8px;top:839.9px;font-size:11.2px;line-height:11.2px;color:#111;">Proposed</div>
<div class="t" style="left:626.0px;top:839.9px;font-size:11.2px;line-height:11.2px;color:#111;">C++ Programmer</div>
<div class="t" style="right:1077.2px;top:839.9px;font-size:11.2px;line-height:11.2px;color:#111;">21 %</div>
<svg class="a" style="left:426px;top:861.4px;" width="12" height="15" viewBox="0 0 12 15"><rect x="0.5" y="0.5" width="10.5" height="13.5" fill="#bfe4f0" stroke="#4a6cc0"/><rect x="1" y="1" width="9.5" height="2.5" fill="#fff"/><path d="M1 3.8 H10.5" stroke="#4a6cc0" stroke-width="0.8"/><path d="M2 5.8 H7" stroke="#e05050" stroke-width="1.1"/><path d="M2 8.5 H7 M2 11 H7" stroke="#334" stroke-width="1.1"/><rect x="8" y="5" width="1.3" height="1.3" fill="#e05050"/><rect x="8" y="8" width="1.3" height="1.3" fill="#334"/><rect x="8" y="10.5" width="1.3" height="1.3" fill="#334"/></svg>
<div class="t" style="left:441.0px;top:862.9px;font-size:11.2px;line-height:11.2px;color:#111;">Order</div>
<div class="t" style="left:513.8px;top:862.9px;font-size:11.2px;line-height:11.2px;color:#111;">Proposed</div>
<div class="t" style="left:626.0px;top:862.9px;font-size:11.2px;line-height:11.2px;color:#111;">Business Analyst</div>
<div class="t" style="right:1077.2px;top:862.9px;font-size:11.2px;line-height:11.2px;color:#111;">80 %</div>
<svg class="a" style="left:426px;top:884.4px;" width="12" height="15" viewBox="0 0 12 15"><rect x="0.5" y="0.5" width="10.5" height="13.5" fill="#bfe4f0" stroke="#4a6cc0"/><rect x="1" y="1" width="9.5" height="2.5" fill="#fff"/><path d="M1 3.8 H10.5" stroke="#4a6cc0" stroke-width="0.8"/><path d="M2 5.8 H7" stroke="#e05050" stroke-width="1.1"/><path d="M2 8.5 H7 M2 11 H7" stroke="#334" stroke-width="1.1"/><rect x="8" y="5" width="1.3" height="1.3" fill="#e05050"/><rect x="8" y="8" width="1.3" height="1.3" fill="#334"/><rect x="8" y="10.5" width="1.3" height="1.3" fill="#334"/></svg>
<div class="t" style="left:441.0px;top:885.9px;font-size:11.2px;line-height:11.2px;color:#111;">LineItem</div>
<div class="t" style="left:513.8px;top:885.9px;font-size:11.2px;line-height:11.2px;color:#111;">Proposed</div>
<div class="t" style="left:626.0px;top:885.9px;font-size:11.2px;line-height:11.2px;color:#111;">Developer</div>
<div class="t" style="right:1077.2px;top:885.9px;font-size:11.2px;line-height:11.2px;color:#111;">0 %</div>
<div class="a" style="left:422px;top:903px;width:424px;height:22px;background:#d7e4f5;"></div>
<div class="a" style="left:734px;top:903px;width:2px;height:22px;background:#fff;"></div>
<div class="a" style="left:511px;top:903px;width:111px;height:22px;background:#fff;box-sizing:border-box;border:1px solid #111;"></div>
<svg class="a" style="left:426px;top:907.4px;" width="12" height="15" viewBox="0 0 12 15"><rect x="0.5" y="0.5" width="10.5" height="13.5" fill="#bfe4f0" stroke="#4a6cc0"/><rect x="1" y="1" width="9.5" height="2.5" fill="#fff"/><path d="M1 3.8 H10.5" stroke="#4a6cc0" stroke-width="0.8"/><path d="M2 5.8 H7" stroke="#e05050" stroke-width="1.1"/><path d="M2 8.5 H7 M2 11 H7" stroke="#334" stroke-width="1.1"/><rect x="8" y="5" width="1.3" height="1.3" fill="#e05050"/><rect x="8" y="8" width="1.3" height="1.3" fill="#334"/><rect x="8" y="10.5" width="1.3" height="1.3" fill="#334"/></svg>
<div class="t" style="left:441.0px;top:908.9px;font-size:11.2px;line-height:11.2px;color:#111;">Shopping...</div>
<div class="t" style="left:513.8px;top:908.9px;font-size:11.2px;line-height:11.2px;color:#111;">Proposed</div>
<div class="t" style="left:626.0px;top:908.9px;font-size:11.2px;line-height:11.2px;color:#111;">Developer</div>
<div class="t" style="right:1077.2px;top:908.9px;font-size:11.2px;line-height:11.2px;color:#111;">10 %</div>
<svg class="a" style="left:424px;top:931.4px;" width="15" height="12" viewBox="0 0 15 12"><defs><linearGradient id="rq" x1="0" x2="0" y1="0" y2="1"><stop offset="0" stop-color="#f8a0b0"/><stop offset="1" stop-color="#c01020"/></linearGradient></defs><rect x="0.5" y="0.5" width="13.5" height="10" fill="#d4e0f2" stroke="#303040"/><rect x="1" y="1" width="2.6" height="9" fill="url(#rq)"/><path d="M5.5 5.5 L7.5 8 L11.5 2.5" stroke="#108a30" stroke-width="1.4" fill="none"/></svg>
<div class="t" style="left:441.0px;top:931.9px;font-size:11.2px;line-height:11.2px;color:#111;">REQ017 -R...</div>
<div class="t" style="left:513.8px;top:931.9px;font-size:11.2px;line-height:11.2px;color:#111;">Validated</div>
<div class="t" style="left:626.0px;top:931.9px;font-size:11.2px;line-height:11.2px;color:#111;">C++ Programmer</div>
<div class="t" style="right:1077.2px;top:931.9px;font-size:11.2px;line-height:11.2px;color:#111;">0 %</div>
<svg class="a" style="left:385px;top:955px;" width="6" height="6" viewBox="0 0 6 6"><path d="M6 0 V6 H0z" fill="#b0b0b0"/></svg>
<svg class="a" style="left:402px;top:952px;" width="14" height="16" viewBox="0 0 14 16"><circle cx="8.5" cy="2" r="1.8" fill="none" stroke="#3a4a8a" stroke-width="1.2"/><path d="M7.5 4 L6 9 L2 15 M6 9 L10 15 M2 7 L7.5 4.5 L12 7" fill="none" stroke="#3a4a8a" stroke-width="1.3"/></svg>
<div class="t" style="left:418.0px;top:954.9px;font-size:11.2px;line-height:11.2px;color:#111;"><span style="display:inline-block;transform:scaleX(0.9697);transform-origin:0 0">Joe</span></div>
<svg class="a" style="left:426px;top:976.4px;" width="12" height="15" viewBox="0 0 12 15"><rect x="0.5" y="0.5" width="10.5" height="13.5" fill="#bfe4f0" stroke="#4a6cc0"/><rect x="1" y="1" width="9.5" height="2.5" fill="#fff"/><path d="M1 3.8 H10.5" stroke="#4a6cc0" stroke-width="0.8"/><path d="M2 5.8 H7" stroke="#e05050" stroke-width="1.1"/><path d="M2 8.5 H7 M2 11 H7" stroke="#334" stroke-width="1.1"/><rect x="8" y="5" width="1.3" height="1.3" fill="#e05050"/><rect x="8" y="8" width="1.3" height="1.3" fill="#334"/><rect x="8" y="10.5" width="1.3" height="1.3" fill="#334"/></svg>
<div class="t" style="left:441.0px;top:977.9px;font-size:11.2px;line-height:11.2px;color:#111;">Player</div>
<div class="t" style="left:513.8px;top:977.9px;font-size:11.2px;line-height:11.2px;color:#111;">Proposed</div>
<div class="t" style="left:626.0px;top:977.9px;font-size:11.2px;line-height:11.2px;color:#111;">Java Programmer</div>
<div class="t" style="right:1077.2px;top:977.9px;font-size:11.2px;line-height:11.2px;color:#111;">0 %</div>
<div class="a" style="left:377px;top:992px;width:469px;height:16px;background:#d4d0c8;"></div>
<div class="a" style="left:376px;top:1009px;width:470px;height:1px;background:#c8c8c8;"></div>
<svg class="a" style="left:377px;top:1014px;" width="60" height="10" viewBox="0 0 60 10"><g fill="#777"><rect x="0" y="1" width="1.3" height="8"/><path d="M7 1 L2 5 L7 9z"/><path d="M21 1 L16 5 L21 9z"/><path d="M32 1 L37 5 L32 9z"/><path d="M48 1 L53 5 L48 9z"/><rect x="53.5" y="1" width="1.3" height="8"/></g></svg>
<svg class="a" style="left:0;top:0" width="1920" height="1052" viewBox="0 0 1920 1052"><path d="M539.5 1010.5 L544 1026.5 H623.5 L630.7 1010.5" fill="none" stroke="#b8b8b8"/><path d="M628 1010.5 L632.5 1026.5 H704.5 L711.8 1010.5" fill="none" stroke="#b8b8b8"/><path d="M439.3 1010.5 L446.6 1026.5 H534 L542.3 1010.5" fill="#fff" stroke="#b8b8b8"/></svg><div class="t" style="left:448.0px;top:1012.1px;font-size:11.5px;line-height:11.5px;color:#111;font-weight:700;"><span style="display:inline-block;transform:scaleX(1.0293);transform-origin:0 0">Resource View</span></div>
<div class="t" style="left:550.0px;top:1012.0px;font-size:11px;line-height:11px;color:#222;"><span style="display:inline-block;transform:scaleX(0.9692);transform-origin:0 0">Element View</span></div>
<div class="t" style="left:638.0px;top:1012.0px;font-size:11px;line-height:11px;color:#222;"><span style="display:inline-block;transform:scaleX(1.0047);transform-origin:0 0">Report View</span></div>
<div class="a" style="left:851px;top:768px;width:1038px;height:242px;background:#f0f0f0;box-sizing:border-box;border:1px solid #dadada;"></div>
<div class="t" style="left:855.3px;top:772.9px;font-size:10.8px;line-height:10.8px;color:#111;"><span style="display:inline-block;transform:scaleX(1.0371);transform-origin:0 0">February 2011</span></div>
<div class="a" style="left:852px;top:790px;width:1020px;height:20px;background:#f0f0f0;"></div>
<div class="a" style="left:852px;top:810px;width:1020px;height:182px;background:#fff;"></div>
<svg class="a" style="left:0;top:0" width="1920" height="1052" viewBox="0 0 1920 1052"><defs><clipPath id="gc"><rect x="854" y="770" width="1018" height="222"/></clipPath></defs><g clip-path="url(#gc)"><rect x="852" y="810" width="6" height="182" fill="#f0f0f0"/><rect x="858" y="810" width="72" height="182" fill="#f0f0f0"/><path d="M858.5 790 V992" stroke="#e2e2e2"/><path d="M930.5 790 V992" stroke="#e2e2e2"/><path d="M1002.5 790 V992" stroke="#e2e2e2"/><path d="M1074.5 790 V992" stroke="#e2e2e2"/><path d="M1146.5 790 V992" stroke="#e2e2e2"/><path d="M1218.5 790 V992" stroke="#e2e2e2"/><rect x="1290" y="810" width="72" height="182" fill="#f0f0f0"/><path d="M1290.5 790 V992" stroke="#e2e2e2"/><rect x="1362" y="810" width="72" height="182" fill="#f0f0f0"/><path d="M1362.5 790 V992" stroke="#e2e2e2"/><path d="M1434.5 790 V992" stroke="#e2e2e2"/><path d="M1506.5 790 V992" stroke="#e2e2e2"/><path d="M1578.5 790 V992" stroke="#e2e2e2"/><path d="M1650.5 790 V992" stroke="#e2e2e2"/><path d="M1722.5 790 V992" stroke="#e2e2e2"/><rect x="1794" y="810" width="72" height="182" fill="#f0f0f0"/><path d="M1794.5 790 V992" stroke="#e2e2e2"/><rect x="1866" y="810" width="6" height="182" fill="#f0f0f0"/><path d="M1866.5 790 V992" stroke="#e2e2e2"/><path d="M852 810.5 H1872" stroke="#e4e4e4"/><path d="M852 833.5 H1872" stroke="#e4e4e4"/><path d="M852 856.5 H1872" stroke="#e4e4e4"/><path d="M852 879.5 H1872" stroke="#e4e4e4"/><path d="M852 902.5 H1872" stroke="#e4e4e4"/><path d="M852 925.5 H1872" stroke="#e4e4e4"/><path d="M852 948.5 H1872" stroke="#e4e4e4"/><path d="M852 971.5 H1872" stroke="#e4e4e4"/><path d="M852 994.5 H1872" stroke="#e4e4e4"/><path d="M852 790.5 H1872" stroke="#e4e4e4"/><rect x="846" y="816.0" width="1032" height="12" rx="3" fill="#4a7acc" stroke="#24407a"/><rect x="847" y="818.0" width="1030" height="4.5" fill="#6c98dc"/><rect x="846" y="862.2" width="156" height="11" rx="3" fill="#4a7acc" stroke="#24407a"/><rect x="847" y="864.2" width="154" height="4.0" fill="#6c98dc"/><rect x="846" y="862.2" width="99" height="11" rx="3" fill="#d4def0" stroke="#24407a"/><rect x="847" y="863.2" width="98" height="4.5" fill="#e6edf8"/><path d="M945 862.2 V873.2" stroke="#24407a"/><rect x="1003" y="885.5" width="72" height="11" rx="3" fill="#4a7acc" stroke="#24407a"/><rect x="1004" y="887.5" width="70" height="4.0" fill="#6c98dc"/><rect x="1143" y="904.5" width="110" height="18" rx="6" fill="#a8bce0" opacity="0.8"/><rect x="1146" y="907.5" width="104" height="12" rx="3" fill="#4a7acc" stroke="#24407a"/><rect x="1147" y="909.5" width="102" height="4.5" fill="#6c98dc"/><rect x="1146" y="907.5" width="23" height="12" rx="3" fill="#d4def0" stroke="#24407a"/><rect x="1147" y="908.5" width="22" height="5.0" fill="#e6edf8"/><path d="M1169 907.5 V919.5" stroke="#24407a"/></g></svg>
<div class="t" style="left:494.0px;width:800px;text-align:center;top:795.3px;font-size:10.8px;line-height:10.8px;color:#111;">20</div>
<div class="t" style="left:566.0px;width:800px;text-align:center;top:795.3px;font-size:10.8px;line-height:10.8px;color:#111;">21</div>
<div class="t" style="left:638.0px;width:800px;text-align:center;top:795.3px;font-size:10.8px;line-height:10.8px;color:#111;">22</div>
<div class="t" style="left:710.0px;width:800px;text-align:center;top:795.3px;font-size:10.8px;line-height:10.8px;color:#111;">23</div>
<div class="t" style="left:782.0px;width:800px;text-align:center;top:795.3px;font-size:10.8px;line-height:10.8px;color:#111;">24</div>
<div class="t" style="left:854.0px;width:800px;text-align:center;top:795.3px;font-size:10.8px;line-height:10.8px;color:#111;">25</div>
<div class="t" style="left:926.0px;width:800px;text-align:center;top:795.3px;font-size:10.8px;line-height:10.8px;color:#111;">26</div>
<div class="t" style="left:998.0px;width:800px;text-align:center;top:795.3px;font-size:10.8px;line-height:10.8px;color:#111;">27</div>
<div class="t" style="left:1070.0px;width:800px;text-align:center;top:795.3px;font-size:10.8px;line-height:10.8px;color:#111;">28</div>
<div class="t" style="left:1142.0px;width:800px;text-align:center;top:795.3px;font-size:10.8px;line-height:10.8px;color:#111;">01</div>
<div class="t" style="left:1214.0px;width:800px;text-align:center;top:795.3px;font-size:10.8px;line-height:10.8px;color:#111;">02</div>
<div class="t" style="left:1286.0px;width:800px;text-align:center;top:795.3px;font-size:10.8px;line-height:10.8px;color:#111;">03</div>
<div class="t" style="left:1358.0px;width:800px;text-align:center;top:795.3px;font-size:10.8px;line-height:10.8px;color:#111;">04</div>
<div class="t" style="left:1430.0px;width:800px;text-align:center;top:795.3px;font-size:10.8px;line-height:10.8px;color:#111;">05</div>
<div class="a" style="left:1872px;top:770px;width:16px;height:222px;background:#e8e8e8;"></div>
<div class="a" style="left:1873px;top:770px;width:14px;height:15px;background:#f7f7f7;"></div>
<svg class="a" style="left:1876px;top:775px;" width="9" height="5" viewBox="0 0 9 5"><path d="M0 5 L4.5 0 L9 5z" fill="#606060"/></svg>
<div class="a" style="left:1873px;top:809px;width:14px;height:47px;background:#f9f9f9;"></div>
<div class="a" style="left:1873px;top:977px;width:14px;height:15px;background:#f7f7f7;"></div>
<svg class="a" style="left:1876px;top:982px;" width="9" height="5" viewBox="0 0 9 5"><path d="M0 0 L4.5 5 L9 0z" fill="#606060"/></svg>
<div class="a" style="left:852px;top:992px;width:1020px;height:17px;background:#e8e8e8;"></div>
<div class="a" style="left:855px;top:993px;width:14px;height:15px;background:#f7f7f7;"></div>
<svg class="a" style="left:859px;top:996px;" width="5" height="9" viewBox="0 0 5 9"><path d="M5 0 L0 4.5 L5 9z" fill="#606060"/></svg>
<div class="a" style="left:1318px;top:993px;width:8px;height:15px;background:#f9f9f9;"></div>
<div class="a" style="left:1857px;top:993px;width:14px;height:15px;background:#f7f7f7;"></div>
<svg class="a" style="left:1862px;top:996px;" width="5" height="9" viewBox="0 0 5 9"><path d="M0 0 L5 4.5 L0 9z" fill="#606060"/></svg>
<div class="a" style="left:1180px;top:473px;width:586px;height:508px;background:#f9f9f9;box-sizing:border-box;border:1px solid #9a9a9a;box-shadow:2px 3px 6px rgba(0,0,0,0.28);"></div>
<div class="a" style="left:1181px;top:474px;width:584px;height:27px;background:#f0f0f0;"></div>
<div class="t" style="left:1188.4px;top:483.4px;font-size:11px;line-height:11px;color:#a8a8a8;"><span style="display:inline-block;transform:scaleX(1.0353);transform-origin:0 0">Model Message</span></div>
<svg class="a" style="left:1744px;top:485px;" width="9" height="9" viewBox="0 0 9 9"><path d="M0.5 0.5 L8.5 8.5 M8.5 0.5 L0.5 8.5" stroke="#999" stroke-width="1.2"/></svg>
<div class="a" style="left:1195px;top:512px;width:69px;height:23px;background:#fff;box-sizing:border-box;border:1px solid #d2d2d2;"></div>
<div class="t" style="left:1221.0px;top:518.5px;font-size:11px;line-height:11px;color:#222;"><span style="display:inline-block;transform:scaleX(1.0894);transform-origin:0 0">To:</span></div>
<div class="a" style="left:1222px;top:529px;width:5px;height:1px;background:#222;"></div>
<div class="a" style="left:1270px;top:513px;width:481px;height:42px;background:#fff;box-sizing:border-box;border:1px solid #a0a0a0;border-top:2px solid #6a6a6a;border-left:2px solid #6a6a6a;"></div>
<div class="t" style="left:1275.5px;top:516.6px;font-size:11px;line-height:11px;color:#111;"><span style="display:inline-block;transform:scaleX(1.0261);transform-origin:0 0">Jane Ward &lt;_janeward&gt;,</span></div>
<div class="a" style="left:1734px;top:515px;width:16px;height:38px;background:#e4e4e4;"></div>
<div class="a" style="left:1734px;top:515px;width:16px;height:16px;background:#eaeaea;box-sizing:border-box;border:1px solid #a0a0a0;"></div>
<svg class="a" style="left:1738px;top:520px;" width="8" height="5" viewBox="0 0 8 5"><path d="M0 5 L4 0 L8 5z" fill="#808080"/></svg>
<div class="a" style="left:1734px;top:537px;width:16px;height:16px;background:#eaeaea;box-sizing:border-box;border:1px solid #a0a0a0;"></div>
<svg class="a" style="left:1738px;top:542px;" width="8" height="5" viewBox="0 0 8 5"><path d="M0 0 L4 5 L8 0z" fill="#808080"/></svg>
<div class="t" style="left:1198.0px;top:568.1px;font-size:11px;line-height:11px;color:#222;"><span style="display:inline-block;transform:scaleX(0.9862);transform-origin:0 0">Subject:</span></div>
<div class="a" style="left:1270px;top:563px;width:482px;height:23px;background:#fff;box-sizing:border-box;border:1px solid #c0c0c0;"></div>
<div class="t" style="left:1275.5px;top:568.1px;font-size:11px;line-height:11px;color:#111;"><span style="display:inline-block;transform:scaleX(0.9670);transform-origin:0 0">Changes to be checked in</span></div>
<div class="a" style="left:1270px;top:595px;width:146px;height:28px;background:#fdfdfd;box-sizing:border-box;border:1px solid #c4c4c4;"></div>
<svg class="a" style="left:1277px;top:601px;" width="17" height="17" viewBox="0 0 17 17"><circle cx="7" cy="7" r="6.5" fill="#3050b0"/><path d="M2 5 Q5 2 7 4 T12 6 M3 9 Q6 7 9 10" stroke="#9ad" stroke-width="1.5" fill="none"/><circle cx="9" cy="7" r="2" fill="#c8e0ff" opacity="0.6"/><g fill="none" stroke="#c09020" stroke-width="1.6"><ellipse cx="10" cy="13" rx="3" ry="2"/><ellipse cx="13.5" cy="13" rx="3" ry="2"/></g></svg>
<div class="t" style="left:1304.0px;top:603.3px;font-size:11px;line-height:11px;color:#222;"><span style="display:inline-block;transform:scaleX(0.9643);transform-origin:0 0">Insert Quick Link</span></div>
<svg class="a" style="left:1399px;top:607px;" width="9" height="5" viewBox="0 0 9 5"><path d="M0 0 H9 L4.5 4.5z" fill="#555"/></svg>
<div class="t" style="left:1584.8px;top:603.3px;font-size:11px;line-height:11px;color:#222;"><span style="display:inline-block;transform:scaleX(0.9400);transform-origin:0 0">Flag:</span></div>
<div class="a" style="left:1637px;top:595px;width:114px;height:28px;background:#fdfdfd;box-sizing:border-box;border:1px solid #c4c4c4;"></div>
<svg class="a" style="left:1646px;top:603px;" width="12" height="11" viewBox="0 0 12 11"><path d="M1 0.5 L11 3 L6 5 L4 10.5z" fill="none" stroke="#555" stroke-width="1.1"/></svg>
<div class="t" style="left:1681.7px;top:603.3px;font-size:11px;line-height:11px;color:#222;"><span style="display:inline-block;transform:scaleX(0.9887);transform-origin:0 0">None</span></div>
<svg class="a" style="left:1734px;top:607px;" width="9" height="5" viewBox="0 0 9 5"><path d="M0 0 H9 L4.5 4.5z" fill="#555"/></svg>
<div class="a" style="left:1195px;top:631px;width:556px;height:298px;background:#fafafa;"></div>
<div class="a" style="left:1195px;top:631px;width:1px;height:298px;background:#5a5a5a;"></div>
<div class="a" style="left:1197px;top:631px;width:554px;height:25px;background:#f0f0f0;"></div>
<div class="a" style="left:1195px;top:631px;width:556px;height:1px;background:#d8d8d8;"></div>
<div class="t" style="left:1203.0px;top:638.1px;font-size:14px;line-height:14px;color:#222;font-weight:700;font-family:Liberation Serif,serif;">B</div>
<div class="t" style="left:1228.0px;top:638.1px;font-size:14px;line-height:14px;color:#444;font-family:Liberation Serif,serif;font-style:italic;">I</div>
<div class="t" style="left:1246.0px;top:638.1px;font-size:14px;line-height:14px;color:#222;font-family:Liberation Serif,serif;">U</div>
<div class="a" style="left:1245px;top:652px;width:13px;height:1px;background:#222;"></div>
<svg class="a" style="left:1267px;top:635px;" width="17" height="17" viewBox="0 0 17 17"><text x="3" y="15" font-size="15" font-family="Liberation Serif" fill="#334">A</text><rect x="1" y="1" width="3" height="3" fill="#e040e0"/><rect x="4" y="0" width="3" height="3" fill="#20c0e0"/><rect x="3" y="3" width="3" height="3" fill="#e0c020"/></svg>
<div class="a" style="left:1291px;top:636px;width:1px;height:18px;background:#c8c8c8;"></div>
<svg class="a" style="left:1299px;top:637px;" width="13" height="14" viewBox="0 0 13 14"><g fill="#333"><rect x="0" y="1" width="2" height="2"/><rect x="0" y="6" width="2" height="2"/><rect x="0" y="11" width="2" height="2"/></g><path d="M4 2 H13 M4 7 H13 M4 12 H13" stroke="#333"/></svg>
<svg class="a" style="left:1320px;top:636px;" width="14" height="16" viewBox="0 0 14 16"><text x="0" y="5" font-size="5.5" font-family="Liberation Sans" fill="#333">1</text><text x="0" y="10" font-size="5.5" font-family="Liberation Sans" fill="#333">2</text><text x="0" y="15" font-size="5.5" font-family="Liberation Sans" fill="#333">3</text><path d="M5 3 H14 M5 8 H14 M5 13 H14" stroke="#333"/></svg>
<div class="a" style="left:1342px;top:636px;width:1px;height:18px;background:#c8c8c8;"></div>
<svg class="a" style="left:1351px;top:636px;" width="15" height="16" viewBox="0 0 15 16"><path d="M1 7 L7 14 M7 7 L1 14" stroke="#222" stroke-width="1.4"/><text x="9" y="7" font-size="6" font-family="Liberation Sans" fill="#c02020">2</text></svg>
<svg class="a" style="left:1372px;top:636px;" width="16" height="16" viewBox="0 0 16 16"><path d="M1 2 L7 9 M7 2 L1 9" stroke="#222" stroke-width="1.4"/><text x="9" y="14" font-size="6" font-family="Liberation Sans" fill="#222">2</text></svg>
<svg class="a" style="left:1392px;top:636px;" width="17" height="17" viewBox="0 0 17 17"><circle cx="7" cy="7" r="6.5" fill="#3050b0"/><path d="M2 5 Q5 2 7 4 T12 6 M3 9 Q6 7 9 10" stroke="#9ad" stroke-width="1.5" fill="none"/><circle cx="9" cy="7" r="2" fill="#c8e0ff" opacity="0.6"/><g fill="none" stroke="#c09020" stroke-width="1.6"><ellipse cx="10" cy="13" rx="3" ry="2"/><ellipse cx="13.5" cy="13" rx="3" ry="2"/></g></svg>
<div class="a" style="left:1203px;top:663px;width:541px;height:259px;background:#fff;"></div>
<div class="t" style="left:1208.3px;top:670.4px;font-size:12px;line-height:12px;color:#111;">Hi Jane,</div>
<div class="t" style="left:1208.3px;top:699.6px;font-size:12px;line-height:12px;color:#111;"><span style="display:inline-block;transform:scaleX(1.0157);transform-origin:0 0">We need to get the remaining changes checked in before we can finalize the security</span></div>
<div class="t" style="left:1208.3px;top:714.8px;font-size:12px;line-height:12px;color:#111;">permissions.</div>
<div class="t" style="left:1208.3px;top:745.3px;font-size:12px;line-height:12px;color:#111;"><span style="display:inline-block;transform:scaleX(1.0118);transform-origin:0 0">Can you ensure any remaining changes for your team are checked in before the end of the day?</span></div>
<div class="t" style="left:1208.3px;top:775.4px;font-size:12px;line-height:12px;color:#111;">Regards,</div>
<div class="t" style="left:1208.3px;top:805.1px;font-size:12px;line-height:12px;color:#111;">Pat</div>
<div class="a" style="left:1652px;top:937px;width:99px;height:28px;background:#fdfdfd;box-sizing:border-box;border:1px solid #2c4c8c;"></div>
<svg class="a" style="left:1660px;top:944px;" width="17" height="14" viewBox="0 0 17 14"><rect x="0.5" y="0.5" width="13" height="10" fill="#e8ecff" stroke="#6070b0"/><path d="M0.5 0.5 L7 6 L13.5 0.5" fill="none" stroke="#6070b0"/><path d="M8 9 H14 M11.5 6.5 L14.5 9 L11.5 11.5" stroke="#c03090" stroke-width="1.6" fill="none"/></svg>
<div class="t" style="left:1699.3px;top:946.6px;font-size:11px;line-height:11px;color:#222;"><span style="display:inline-block;transform:scaleX(0.9532);transform-origin:0 0">Send</span></div>
<div class="a" style="left:1699px;top:957px;width:7px;height:1px;background:#222;"></div>
</body></html>
